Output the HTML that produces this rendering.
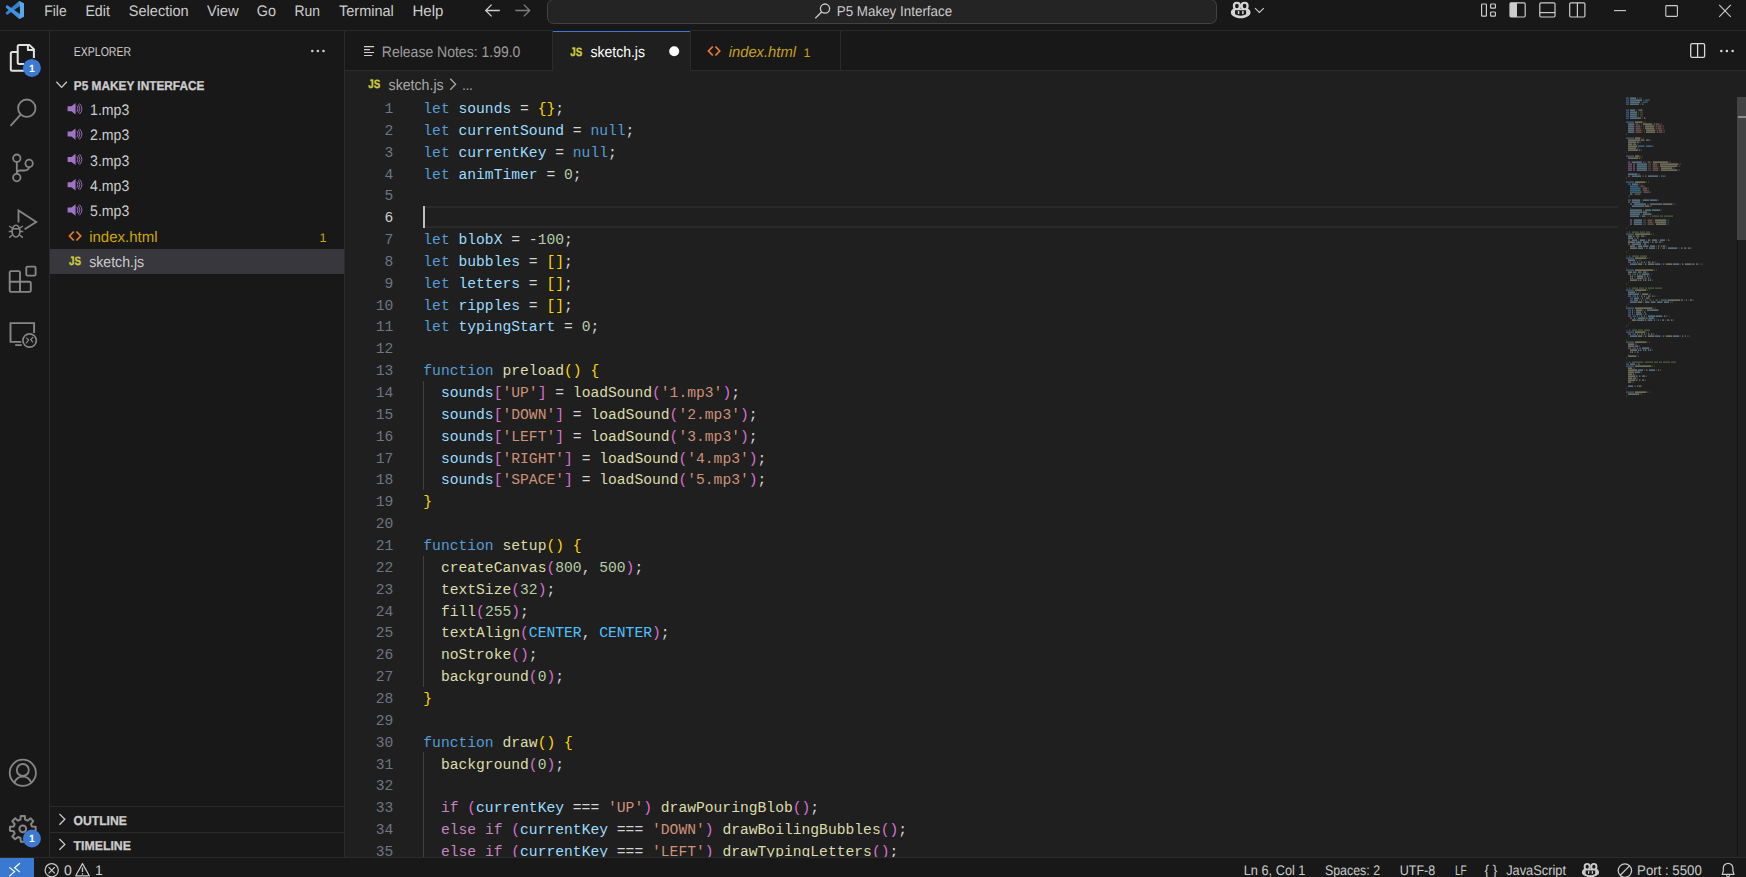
<!DOCTYPE html><html lang="en"><head><meta charset="utf-8"><title>sketch.js - P5 Makey Interface - Visual Studio Code</title>
<style>
*{box-sizing:border-box;margin:0;padding:0}
html,body{width:1746px;height:877px;overflow:hidden;background:#181818}
body{position:relative;font-family:"Liberation Sans", sans-serif;color:#ccc}
.abs{position:absolute}
#editor{left:345px;top:71px;width:1401px;height:786px;background:#1f1f1f}
#tabs{left:345px;top:31px;width:1401px;height:39px;background:#181818}
.hl{background:#2b2b2b}
.cl{position:absolute;left:78.30000000000001px;height:22px;line-height:22px;white-space:pre;font-family:"Liberation Mono", monospace;font-size:14.66px;color:#d4d4d4}
.ln{position:absolute;left:0px;width:48.39999999999998px;height:22px;line-height:22px;text-align:right;font-family:"Liberation Mono", monospace;font-size:14.66px;color:#6e7681}
.ln.a{color:#ccc}
svg text{font-family:"Liberation Sans", sans-serif;text-rendering:geometricPrecision}
</style></head><body>
<div class="abs" style="left:0px;top:30px;width:1746px;height:1px;background:#2b2b2b;"></div>
<div class="abs" style="left:49px;top:31px;width:1px;height:826px;background:#2b2b2b;"></div>
<div class="abs" style="left:344px;top:31px;width:1px;height:826px;background:#2b2b2b;"></div>
<div id="tabs" class="abs"></div>
<div class="abs" style="left:345px;top:70px;width:1401px;height:1px;background:#2b2b2b;"></div>
<div id="editor" class="abs"></div>
<div class="abs" style="left:552px;top:31px;width:1px;height:39px;background:#2b2b2b;"></div>
<div class="abs" style="left:553px;top:31px;width:137px;height:40px;background:#1f1f1f;"></div>
<div class="abs" style="left:553px;top:30px;width:137px;height:1px;background:#1b1a19;"></div>
<div class="abs" style="left:553px;top:31px;width:137px;height:1px;background:#3a7ad4;"></div>
<div class="abs" style="left:690px;top:31px;width:1px;height:39px;background:#2b2b2b;"></div>
<div class="abs" style="left:840px;top:31px;width:1px;height:39px;background:#2b2b2b;"></div>
<div class="abs" style="left:547px;top:-1.5px;width:670px;height:25.5px;background:#242424;border:1px solid #424242;border-radius:6.5px"></div>
<div class="abs" style="left:50px;top:249px;width:293.5px;height:25px;background:#37373d;"></div>
<div class="abs" style="left:50px;top:806px;width:294px;height:1px;background:#2b2b2b;"></div>
<div class="abs" style="left:50px;top:832px;width:294px;height:1px;background:#2b2b2b;"></div>
<div class="abs" style="left:0px;top:857px;width:1746px;height:1px;background:#2b2b2b;"></div>
<div class="abs" style="left:0px;top:858px;width:1746px;height:19px;background:#181818;"></div>
<div class="abs" style="left:0px;top:858px;width:34px;height:19px;background:#3a79d2;"></div>
<div class="abs" style="left:423px;top:206px;width:1195px;height:2px;background:#292929;"></div>
<div class="abs" style="left:423px;top:226px;width:1195px;height:2px;background:#292929;"></div>
<div class="abs" style="left:423px;top:206px;width:2px;height:22px;background:#bdbdbd;"></div>
<div class="abs" style="left:423px;top:381px;width:1px;height:109px;background:#404040;"></div>
<div class="abs" style="left:423px;top:556px;width:1px;height:131px;background:#404040;"></div>
<div class="abs" style="left:423px;top:752px;width:1px;height:105px;background:#404040;"></div>
<div class="abs" style="left:1737px;top:97px;width:1px;height:760px;background:#141414;"></div>
<div class="abs" style="left:1737px;top:97px;width:9px;height:143px;background:#434343;"></div>
<div class="abs" style="left:1738px;top:116px;width:8px;height:2px;background:#8c8c8c;"></div>
<div class="abs" style="left:345px;top:71px;width:1401px;height:786px;overflow:hidden">
<div class="ln" style="top:27px">1</div>
<div class="cl" style="top:27px"><span style="color:#569cd6">let</span> <span style="color:#9cdcfe">sounds</span> <span style="color:#d4d4d4">=</span> <span style="color:#ffd700">{}</span><span style="color:#d4d4d4">;</span></div>
<div class="ln" style="top:49px">2</div>
<div class="cl" style="top:49px"><span style="color:#569cd6">let</span> <span style="color:#9cdcfe">currentSound</span> <span style="color:#d4d4d4">=</span> <span style="color:#569cd6">null</span><span style="color:#d4d4d4">;</span></div>
<div class="ln" style="top:71px">3</div>
<div class="cl" style="top:71px"><span style="color:#569cd6">let</span> <span style="color:#9cdcfe">currentKey</span> <span style="color:#d4d4d4">=</span> <span style="color:#569cd6">null</span><span style="color:#d4d4d4">;</span></div>
<div class="ln" style="top:93px">4</div>
<div class="cl" style="top:93px"><span style="color:#569cd6">let</span> <span style="color:#9cdcfe">animTimer</span> <span style="color:#d4d4d4">=</span> <span style="color:#b5cea8">0</span><span style="color:#d4d4d4">;</span></div>
<div class="ln" style="top:114px">5</div>
<div class="ln a" style="top:136px">6</div>
<div class="ln" style="top:158px">7</div>
<div class="cl" style="top:158px"><span style="color:#569cd6">let</span> <span style="color:#9cdcfe">blobX</span> <span style="color:#d4d4d4">=</span> <span style="color:#d4d4d4">-</span><span style="color:#b5cea8">100</span><span style="color:#d4d4d4">;</span></div>
<div class="ln" style="top:180px">8</div>
<div class="cl" style="top:180px"><span style="color:#569cd6">let</span> <span style="color:#9cdcfe">bubbles</span> <span style="color:#d4d4d4">=</span> <span style="color:#ffd700">[]</span><span style="color:#d4d4d4">;</span></div>
<div class="ln" style="top:202px">9</div>
<div class="cl" style="top:202px"><span style="color:#569cd6">let</span> <span style="color:#9cdcfe">letters</span> <span style="color:#d4d4d4">=</span> <span style="color:#ffd700">[]</span><span style="color:#d4d4d4">;</span></div>
<div class="ln" style="top:224px">10</div>
<div class="cl" style="top:224px"><span style="color:#569cd6">let</span> <span style="color:#9cdcfe">ripples</span> <span style="color:#d4d4d4">=</span> <span style="color:#ffd700">[]</span><span style="color:#d4d4d4">;</span></div>
<div class="ln" style="top:245px">11</div>
<div class="cl" style="top:245px"><span style="color:#569cd6">let</span> <span style="color:#9cdcfe">typingStart</span> <span style="color:#d4d4d4">=</span> <span style="color:#b5cea8">0</span><span style="color:#d4d4d4">;</span></div>
<div class="ln" style="top:267px">12</div>
<div class="ln" style="top:289px">13</div>
<div class="cl" style="top:289px"><span style="color:#569cd6">function</span> <span style="color:#dcdcaa">preload</span><span style="color:#ffd700">()</span> <span style="color:#ffd700">{</span></div>
<div class="ln" style="top:311px">14</div>
<div class="cl" style="top:311px">  <span style="color:#9cdcfe">sounds</span><span style="color:#da70d6">[</span><span style="color:#ce9178">'UP'</span><span style="color:#da70d6">]</span> <span style="color:#d4d4d4">=</span> <span style="color:#dcdcaa">loadSound</span><span style="color:#da70d6">(</span><span style="color:#ce9178">'1.mp3'</span><span style="color:#da70d6">)</span><span style="color:#d4d4d4">;</span></div>
<div class="ln" style="top:333px">15</div>
<div class="cl" style="top:333px">  <span style="color:#9cdcfe">sounds</span><span style="color:#da70d6">[</span><span style="color:#ce9178">'DOWN'</span><span style="color:#da70d6">]</span> <span style="color:#d4d4d4">=</span> <span style="color:#dcdcaa">loadSound</span><span style="color:#da70d6">(</span><span style="color:#ce9178">'2.mp3'</span><span style="color:#da70d6">)</span><span style="color:#d4d4d4">;</span></div>
<div class="ln" style="top:355px">16</div>
<div class="cl" style="top:355px">  <span style="color:#9cdcfe">sounds</span><span style="color:#da70d6">[</span><span style="color:#ce9178">'LEFT'</span><span style="color:#da70d6">]</span> <span style="color:#d4d4d4">=</span> <span style="color:#dcdcaa">loadSound</span><span style="color:#da70d6">(</span><span style="color:#ce9178">'3.mp3'</span><span style="color:#da70d6">)</span><span style="color:#d4d4d4">;</span></div>
<div class="ln" style="top:377px">17</div>
<div class="cl" style="top:377px">  <span style="color:#9cdcfe">sounds</span><span style="color:#da70d6">[</span><span style="color:#ce9178">'RIGHT'</span><span style="color:#da70d6">]</span> <span style="color:#d4d4d4">=</span> <span style="color:#dcdcaa">loadSound</span><span style="color:#da70d6">(</span><span style="color:#ce9178">'4.mp3'</span><span style="color:#da70d6">)</span><span style="color:#d4d4d4">;</span></div>
<div class="ln" style="top:398px">18</div>
<div class="cl" style="top:398px">  <span style="color:#9cdcfe">sounds</span><span style="color:#da70d6">[</span><span style="color:#ce9178">'SPACE'</span><span style="color:#da70d6">]</span> <span style="color:#d4d4d4">=</span> <span style="color:#dcdcaa">loadSound</span><span style="color:#da70d6">(</span><span style="color:#ce9178">'5.mp3'</span><span style="color:#da70d6">)</span><span style="color:#d4d4d4">;</span></div>
<div class="ln" style="top:420px">19</div>
<div class="cl" style="top:420px"><span style="color:#ffd700">}</span></div>
<div class="ln" style="top:442px">20</div>
<div class="ln" style="top:464px">21</div>
<div class="cl" style="top:464px"><span style="color:#569cd6">function</span> <span style="color:#dcdcaa">setup</span><span style="color:#ffd700">()</span> <span style="color:#ffd700">{</span></div>
<div class="ln" style="top:486px">22</div>
<div class="cl" style="top:486px">  <span style="color:#dcdcaa">createCanvas</span><span style="color:#da70d6">(</span><span style="color:#b5cea8">800</span><span style="color:#d4d4d4">,</span> <span style="color:#b5cea8">500</span><span style="color:#da70d6">)</span><span style="color:#d4d4d4">;</span></div>
<div class="ln" style="top:508px">23</div>
<div class="cl" style="top:508px">  <span style="color:#dcdcaa">textSize</span><span style="color:#da70d6">(</span><span style="color:#b5cea8">32</span><span style="color:#da70d6">)</span><span style="color:#d4d4d4">;</span></div>
<div class="ln" style="top:530px">24</div>
<div class="cl" style="top:530px">  <span style="color:#dcdcaa">fill</span><span style="color:#da70d6">(</span><span style="color:#b5cea8">255</span><span style="color:#da70d6">)</span><span style="color:#d4d4d4">;</span></div>
<div class="ln" style="top:551px">25</div>
<div class="cl" style="top:551px">  <span style="color:#dcdcaa">textAlign</span><span style="color:#da70d6">(</span><span style="color:#4fc1ff">CENTER</span><span style="color:#d4d4d4">,</span> <span style="color:#4fc1ff">CENTER</span><span style="color:#da70d6">)</span><span style="color:#d4d4d4">;</span></div>
<div class="ln" style="top:573px">26</div>
<div class="cl" style="top:573px">  <span style="color:#dcdcaa">noStroke</span><span style="color:#da70d6">()</span><span style="color:#d4d4d4">;</span></div>
<div class="ln" style="top:595px">27</div>
<div class="cl" style="top:595px">  <span style="color:#dcdcaa">background</span><span style="color:#da70d6">(</span><span style="color:#b5cea8">0</span><span style="color:#da70d6">)</span><span style="color:#d4d4d4">;</span></div>
<div class="ln" style="top:617px">28</div>
<div class="cl" style="top:617px"><span style="color:#ffd700">}</span></div>
<div class="ln" style="top:639px">29</div>
<div class="ln" style="top:661px">30</div>
<div class="cl" style="top:661px"><span style="color:#569cd6">function</span> <span style="color:#dcdcaa">draw</span><span style="color:#ffd700">()</span> <span style="color:#ffd700">{</span></div>
<div class="ln" style="top:683px">31</div>
<div class="cl" style="top:683px">  <span style="color:#dcdcaa">background</span><span style="color:#da70d6">(</span><span style="color:#b5cea8">0</span><span style="color:#da70d6">)</span><span style="color:#d4d4d4">;</span></div>
<div class="ln" style="top:704px">32</div>
<div class="ln" style="top:726px">33</div>
<div class="cl" style="top:726px">  <span style="color:#c586c0">if</span> <span style="color:#da70d6">(</span><span style="color:#9cdcfe">currentKey</span> <span style="color:#d4d4d4">===</span> <span style="color:#ce9178">'UP'</span><span style="color:#da70d6">)</span> <span style="color:#dcdcaa">drawPouringBlob</span><span style="color:#da70d6">()</span><span style="color:#d4d4d4">;</span></div>
<div class="ln" style="top:748px">34</div>
<div class="cl" style="top:748px">  <span style="color:#c586c0">else</span> <span style="color:#c586c0">if</span> <span style="color:#da70d6">(</span><span style="color:#9cdcfe">currentKey</span> <span style="color:#d4d4d4">===</span> <span style="color:#ce9178">'DOWN'</span><span style="color:#da70d6">)</span> <span style="color:#dcdcaa">drawBoilingBubbles</span><span style="color:#da70d6">()</span><span style="color:#d4d4d4">;</span></div>
<div class="ln" style="top:770px">35</div>
<div class="cl" style="top:770px">  <span style="color:#c586c0">else</span> <span style="color:#c586c0">if</span> <span style="color:#da70d6">(</span><span style="color:#9cdcfe">currentKey</span> <span style="color:#d4d4d4">===</span> <span style="color:#ce9178">'LEFT'</span><span style="color:#da70d6">)</span> <span style="color:#dcdcaa">drawTypingLetters</span><span style="color:#da70d6">()</span><span style="color:#d4d4d4">;</span></div>
</div>
<svg class="abs" style="left:0;top:0" width="1746" height="877" viewBox="0 0 1746 877">
<text x="44.3" y="16" font-size="15.3" fill="#cccccc" textLength="22.3" lengthAdjust="spacingAndGlyphs">File</text>
<text x="85.4" y="16" font-size="15.3" fill="#cccccc" textLength="24.5" lengthAdjust="spacingAndGlyphs">Edit</text>
<text x="128.8" y="16" font-size="15.3" fill="#cccccc" textLength="59.8" lengthAdjust="spacingAndGlyphs">Selection</text>
<text x="207" y="16" font-size="15.3" fill="#cccccc" textLength="31.7" lengthAdjust="spacingAndGlyphs">View</text>
<text x="256.8" y="16" font-size="15.3" fill="#cccccc" textLength="19.2" lengthAdjust="spacingAndGlyphs">Go</text>
<text x="294.5" y="16" font-size="15.3" fill="#cccccc" textLength="25.5" lengthAdjust="spacingAndGlyphs">Run</text>
<text x="339" y="16" font-size="15.3" fill="#cccccc" textLength="54.8" lengthAdjust="spacingAndGlyphs">Terminal</text>
<text x="412.5" y="16" font-size="15.3" fill="#cccccc" textLength="30.9" lengthAdjust="spacingAndGlyphs">Help</text>
<text x="836.7" y="16" font-size="14.3" fill="#cccccc" textLength="115.5" lengthAdjust="spacingAndGlyphs">P5 Makey Interface</text>
<text x="381.8" y="57" font-size="15.3" fill="#9d9d9d" textLength="138.6" lengthAdjust="spacingAndGlyphs">Release Notes: 1.99.0</text>
<text x="590.4" y="57" font-size="15.3" fill="#ffffff" textLength="54.6" lengthAdjust="spacingAndGlyphs">sketch.js</text>
<text x="728.7" y="57" font-size="15.3" fill="#c5a11a" textLength="67.3" lengthAdjust="spacingAndGlyphs" font-style="italic">index.html</text>
<text x="803.4" y="57" font-size="12.5" fill="#c5a11a">1</text>
<text x="388.6" y="90.0" font-size="15.3" fill="#a9a9a9" textLength="55.0" lengthAdjust="spacingAndGlyphs">sketch.js</text>
<text x="462.3" y="90.0" font-size="15.3" fill="#a9a9a9" textLength="10.3" lengthAdjust="spacingAndGlyphs">...</text>
<text x="73.8" y="56.2" font-size="12.9" fill="#cccccc" textLength="57.2" lengthAdjust="spacingAndGlyphs">EXPLORER</text>
<text x="73.8" y="90.2" font-size="12.9" fill="#cccccc" textLength="130.6" lengthAdjust="spacingAndGlyphs" font-weight="bold" stroke="#cccccc" stroke-width="0.3">P5 MAKEY INTERFACE</text>
<text x="90.1" y="115" font-size="15.3" fill="#cccccc" textLength="39.2" lengthAdjust="spacingAndGlyphs">1.mp3</text>
<text x="90.1" y="140" font-size="15.3" fill="#cccccc" textLength="39.2" lengthAdjust="spacingAndGlyphs">2.mp3</text>
<text x="90.1" y="166" font-size="15.3" fill="#cccccc" textLength="39.2" lengthAdjust="spacingAndGlyphs">3.mp3</text>
<text x="90.1" y="191" font-size="15.3" fill="#cccccc" textLength="39.2" lengthAdjust="spacingAndGlyphs">4.mp3</text>
<text x="90.1" y="216" font-size="15.3" fill="#cccccc" textLength="39.2" lengthAdjust="spacingAndGlyphs">5.mp3</text>
<text x="89.2" y="242" font-size="15.3" fill="#cca700" textLength="68.4" lengthAdjust="spacingAndGlyphs">index.html</text>
<text x="319.6" y="242" font-size="12.5" fill="#cca700">1</text>
<text x="89.2" y="267" font-size="15.3" fill="#cccccc" textLength="55.0" lengthAdjust="spacingAndGlyphs">sketch.js</text>
<text x="73.5" y="825" font-size="12.9" fill="#cccccc" textLength="53.3" lengthAdjust="spacingAndGlyphs" font-weight="bold" stroke="#cccccc" stroke-width="0.3">OUTLINE</text>
<text x="73.5" y="850" font-size="12.9" fill="#cccccc" textLength="57.4" lengthAdjust="spacingAndGlyphs" font-weight="bold" stroke="#cccccc" stroke-width="0.3">TIMELINE</text>
<text x="64" y="875" font-size="14.0" fill="#cccccc">0</text>
<text x="95.1" y="875" font-size="14.0" fill="#cccccc">1</text>
<text x="1243.7" y="875" font-size="14.0" fill="#cccccc" textLength="61.8" lengthAdjust="spacingAndGlyphs">Ln 6, Col 1</text>
<text x="1324.9" y="875" font-size="14.0" fill="#cccccc" textLength="55.2" lengthAdjust="spacingAndGlyphs">Spaces: 2</text>
<text x="1399.8" y="875" font-size="14.0" fill="#cccccc" textLength="35.4" lengthAdjust="spacingAndGlyphs">UTF-8</text>
<text x="1454.9" y="875" font-size="14.0" fill="#cccccc" textLength="11.9" lengthAdjust="spacingAndGlyphs">LF</text>
<text x="1484.5" y="874.5" font-size="14.0" fill="#cccccc" textLength="12.7" lengthAdjust="spacingAndGlyphs">{ }</text>
<text x="1506.2" y="875" font-size="14.0" fill="#cccccc" textLength="59.8" lengthAdjust="spacingAndGlyphs">JavaScript</text>
<text x="1637.1" y="875" font-size="14.0" fill="#cccccc" textLength="64.7" lengthAdjust="spacingAndGlyphs">Port : 5500</text>
<g><rect x="1626" y="97.4" width="3" height="1.5" fill="#569cd6" opacity="0.45"/><rect x="1630" y="97.4" width="6" height="1.5" fill="#9cdcfe" opacity="0.45"/><rect x="1637" y="97.4" width="1" height="1.5" fill="#d4d4d4" opacity="0.18"/><rect x="1639" y="97.4" width="2" height="1.5" fill="#ffd700" opacity="0.18"/><rect x="1641" y="97.4" width="1" height="1.5" fill="#d4d4d4" opacity="0.18"/><rect x="1626" y="99.4" width="3" height="1.5" fill="#569cd6" opacity="0.45"/><rect x="1630" y="99.4" width="12" height="1.5" fill="#9cdcfe" opacity="0.45"/><rect x="1643" y="99.4" width="1" height="1.5" fill="#d4d4d4" opacity="0.18"/><rect x="1645" y="99.4" width="4" height="1.5" fill="#569cd6" opacity="0.45"/><rect x="1649" y="99.4" width="1" height="1.5" fill="#d4d4d4" opacity="0.18"/><rect x="1626" y="101.4" width="3" height="1.5" fill="#569cd6" opacity="0.45"/><rect x="1630" y="101.4" width="10" height="1.5" fill="#9cdcfe" opacity="0.45"/><rect x="1641" y="101.4" width="1" height="1.5" fill="#d4d4d4" opacity="0.18"/><rect x="1643" y="101.4" width="4" height="1.5" fill="#569cd6" opacity="0.45"/><rect x="1647" y="101.4" width="1" height="1.5" fill="#d4d4d4" opacity="0.18"/><rect x="1626" y="103.4" width="3" height="1.5" fill="#569cd6" opacity="0.45"/><rect x="1630" y="103.4" width="9" height="1.5" fill="#9cdcfe" opacity="0.45"/><rect x="1640" y="103.4" width="1" height="1.5" fill="#d4d4d4" opacity="0.18"/><rect x="1642" y="103.4" width="1" height="1.5" fill="#b5cea8" opacity="0.45"/><rect x="1643" y="103.4" width="1" height="1.5" fill="#d4d4d4" opacity="0.18"/><rect x="1626" y="109.4" width="3" height="1.5" fill="#569cd6" opacity="0.45"/><rect x="1630" y="109.4" width="5" height="1.5" fill="#9cdcfe" opacity="0.45"/><rect x="1636" y="109.4" width="1" height="1.5" fill="#d4d4d4" opacity="0.18"/><rect x="1638" y="109.4" width="1" height="1.5" fill="#d4d4d4" opacity="0.18"/><rect x="1639" y="109.4" width="3" height="1.5" fill="#b5cea8" opacity="0.45"/><rect x="1642" y="109.4" width="1" height="1.5" fill="#d4d4d4" opacity="0.18"/><rect x="1626" y="111.4" width="3" height="1.5" fill="#569cd6" opacity="0.45"/><rect x="1630" y="111.4" width="7" height="1.5" fill="#9cdcfe" opacity="0.45"/><rect x="1638" y="111.4" width="1" height="1.5" fill="#d4d4d4" opacity="0.18"/><rect x="1640" y="111.4" width="2" height="1.5" fill="#ffd700" opacity="0.18"/><rect x="1642" y="111.4" width="1" height="1.5" fill="#d4d4d4" opacity="0.18"/><rect x="1626" y="113.4" width="3" height="1.5" fill="#569cd6" opacity="0.45"/><rect x="1630" y="113.4" width="7" height="1.5" fill="#9cdcfe" opacity="0.45"/><rect x="1638" y="113.4" width="1" height="1.5" fill="#d4d4d4" opacity="0.18"/><rect x="1640" y="113.4" width="2" height="1.5" fill="#ffd700" opacity="0.18"/><rect x="1642" y="113.4" width="1" height="1.5" fill="#d4d4d4" opacity="0.18"/><rect x="1626" y="115.4" width="3" height="1.5" fill="#569cd6" opacity="0.45"/><rect x="1630" y="115.4" width="7" height="1.5" fill="#9cdcfe" opacity="0.45"/><rect x="1638" y="115.4" width="1" height="1.5" fill="#d4d4d4" opacity="0.18"/><rect x="1640" y="115.4" width="2" height="1.5" fill="#ffd700" opacity="0.18"/><rect x="1642" y="115.4" width="1" height="1.5" fill="#d4d4d4" opacity="0.18"/><rect x="1626" y="117.4" width="3" height="1.5" fill="#569cd6" opacity="0.45"/><rect x="1630" y="117.4" width="11" height="1.5" fill="#9cdcfe" opacity="0.45"/><rect x="1642" y="117.4" width="1" height="1.5" fill="#d4d4d4" opacity="0.18"/><rect x="1644" y="117.4" width="1" height="1.5" fill="#b5cea8" opacity="0.45"/><rect x="1645" y="117.4" width="1" height="1.5" fill="#d4d4d4" opacity="0.18"/><rect x="1626" y="121.4" width="8" height="1.5" fill="#569cd6" opacity="0.45"/><rect x="1635" y="121.4" width="7" height="1.5" fill="#dcdcaa" opacity="0.45"/><rect x="1642" y="121.4" width="2" height="1.5" fill="#ffd700" opacity="0.18"/><rect x="1645" y="121.4" width="1" height="1.5" fill="#ffd700" opacity="0.18"/><rect x="1628" y="123.4" width="6" height="1.5" fill="#9cdcfe" opacity="0.45"/><rect x="1634" y="123.4" width="1" height="1.5" fill="#da70d6" opacity="0.18"/><rect x="1635" y="123.4" width="1" height="1.5" fill="#ce9178" opacity="0.18"/><rect x="1636" y="123.4" width="2" height="1.5" fill="#ce9178" opacity="0.45"/><rect x="1638" y="123.4" width="1" height="1.5" fill="#ce9178" opacity="0.18"/><rect x="1639" y="123.4" width="1" height="1.5" fill="#da70d6" opacity="0.18"/><rect x="1641" y="123.4" width="1" height="1.5" fill="#d4d4d4" opacity="0.18"/><rect x="1643" y="123.4" width="9" height="1.5" fill="#dcdcaa" opacity="0.45"/><rect x="1652" y="123.4" width="1" height="1.5" fill="#da70d6" opacity="0.18"/><rect x="1653" y="123.4" width="1" height="1.5" fill="#ce9178" opacity="0.18"/><rect x="1654" y="123.4" width="1" height="1.5" fill="#ce9178" opacity="0.45"/><rect x="1655" y="123.4" width="1" height="1.5" fill="#ce9178" opacity="0.18"/><rect x="1656" y="123.4" width="3" height="1.5" fill="#ce9178" opacity="0.45"/><rect x="1659" y="123.4" width="1" height="1.5" fill="#ce9178" opacity="0.18"/><rect x="1660" y="123.4" width="1" height="1.5" fill="#da70d6" opacity="0.18"/><rect x="1661" y="123.4" width="1" height="1.5" fill="#d4d4d4" opacity="0.18"/><rect x="1628" y="125.4" width="6" height="1.5" fill="#9cdcfe" opacity="0.45"/><rect x="1634" y="125.4" width="1" height="1.5" fill="#da70d6" opacity="0.18"/><rect x="1635" y="125.4" width="1" height="1.5" fill="#ce9178" opacity="0.18"/><rect x="1636" y="125.4" width="4" height="1.5" fill="#ce9178" opacity="0.45"/><rect x="1640" y="125.4" width="1" height="1.5" fill="#ce9178" opacity="0.18"/><rect x="1641" y="125.4" width="1" height="1.5" fill="#da70d6" opacity="0.18"/><rect x="1643" y="125.4" width="1" height="1.5" fill="#d4d4d4" opacity="0.18"/><rect x="1645" y="125.4" width="9" height="1.5" fill="#dcdcaa" opacity="0.45"/><rect x="1654" y="125.4" width="1" height="1.5" fill="#da70d6" opacity="0.18"/><rect x="1655" y="125.4" width="1" height="1.5" fill="#ce9178" opacity="0.18"/><rect x="1656" y="125.4" width="1" height="1.5" fill="#ce9178" opacity="0.45"/><rect x="1657" y="125.4" width="1" height="1.5" fill="#ce9178" opacity="0.18"/><rect x="1658" y="125.4" width="3" height="1.5" fill="#ce9178" opacity="0.45"/><rect x="1661" y="125.4" width="1" height="1.5" fill="#ce9178" opacity="0.18"/><rect x="1662" y="125.4" width="1" height="1.5" fill="#da70d6" opacity="0.18"/><rect x="1663" y="125.4" width="1" height="1.5" fill="#d4d4d4" opacity="0.18"/><rect x="1628" y="127.4" width="6" height="1.5" fill="#9cdcfe" opacity="0.45"/><rect x="1634" y="127.4" width="1" height="1.5" fill="#da70d6" opacity="0.18"/><rect x="1635" y="127.4" width="1" height="1.5" fill="#ce9178" opacity="0.18"/><rect x="1636" y="127.4" width="4" height="1.5" fill="#ce9178" opacity="0.45"/><rect x="1640" y="127.4" width="1" height="1.5" fill="#ce9178" opacity="0.18"/><rect x="1641" y="127.4" width="1" height="1.5" fill="#da70d6" opacity="0.18"/><rect x="1643" y="127.4" width="1" height="1.5" fill="#d4d4d4" opacity="0.18"/><rect x="1645" y="127.4" width="9" height="1.5" fill="#dcdcaa" opacity="0.45"/><rect x="1654" y="127.4" width="1" height="1.5" fill="#da70d6" opacity="0.18"/><rect x="1655" y="127.4" width="1" height="1.5" fill="#ce9178" opacity="0.18"/><rect x="1656" y="127.4" width="1" height="1.5" fill="#ce9178" opacity="0.45"/><rect x="1657" y="127.4" width="1" height="1.5" fill="#ce9178" opacity="0.18"/><rect x="1658" y="127.4" width="3" height="1.5" fill="#ce9178" opacity="0.45"/><rect x="1661" y="127.4" width="1" height="1.5" fill="#ce9178" opacity="0.18"/><rect x="1662" y="127.4" width="1" height="1.5" fill="#da70d6" opacity="0.18"/><rect x="1663" y="127.4" width="1" height="1.5" fill="#d4d4d4" opacity="0.18"/><rect x="1628" y="129.4" width="6" height="1.5" fill="#9cdcfe" opacity="0.45"/><rect x="1634" y="129.4" width="1" height="1.5" fill="#da70d6" opacity="0.18"/><rect x="1635" y="129.4" width="1" height="1.5" fill="#ce9178" opacity="0.18"/><rect x="1636" y="129.4" width="5" height="1.5" fill="#ce9178" opacity="0.45"/><rect x="1641" y="129.4" width="1" height="1.5" fill="#ce9178" opacity="0.18"/><rect x="1642" y="129.4" width="1" height="1.5" fill="#da70d6" opacity="0.18"/><rect x="1644" y="129.4" width="1" height="1.5" fill="#d4d4d4" opacity="0.18"/><rect x="1646" y="129.4" width="9" height="1.5" fill="#dcdcaa" opacity="0.45"/><rect x="1655" y="129.4" width="1" height="1.5" fill="#da70d6" opacity="0.18"/><rect x="1656" y="129.4" width="1" height="1.5" fill="#ce9178" opacity="0.18"/><rect x="1657" y="129.4" width="1" height="1.5" fill="#ce9178" opacity="0.45"/><rect x="1658" y="129.4" width="1" height="1.5" fill="#ce9178" opacity="0.18"/><rect x="1659" y="129.4" width="3" height="1.5" fill="#ce9178" opacity="0.45"/><rect x="1662" y="129.4" width="1" height="1.5" fill="#ce9178" opacity="0.18"/><rect x="1663" y="129.4" width="1" height="1.5" fill="#da70d6" opacity="0.18"/><rect x="1664" y="129.4" width="1" height="1.5" fill="#d4d4d4" opacity="0.18"/><rect x="1628" y="131.4" width="6" height="1.5" fill="#9cdcfe" opacity="0.45"/><rect x="1634" y="131.4" width="1" height="1.5" fill="#da70d6" opacity="0.18"/><rect x="1635" y="131.4" width="1" height="1.5" fill="#ce9178" opacity="0.18"/><rect x="1636" y="131.4" width="5" height="1.5" fill="#ce9178" opacity="0.45"/><rect x="1641" y="131.4" width="1" height="1.5" fill="#ce9178" opacity="0.18"/><rect x="1642" y="131.4" width="1" height="1.5" fill="#da70d6" opacity="0.18"/><rect x="1644" y="131.4" width="1" height="1.5" fill="#d4d4d4" opacity="0.18"/><rect x="1646" y="131.4" width="9" height="1.5" fill="#dcdcaa" opacity="0.45"/><rect x="1655" y="131.4" width="1" height="1.5" fill="#da70d6" opacity="0.18"/><rect x="1656" y="131.4" width="1" height="1.5" fill="#ce9178" opacity="0.18"/><rect x="1657" y="131.4" width="1" height="1.5" fill="#ce9178" opacity="0.45"/><rect x="1658" y="131.4" width="1" height="1.5" fill="#ce9178" opacity="0.18"/><rect x="1659" y="131.4" width="3" height="1.5" fill="#ce9178" opacity="0.45"/><rect x="1662" y="131.4" width="1" height="1.5" fill="#ce9178" opacity="0.18"/><rect x="1663" y="131.4" width="1" height="1.5" fill="#da70d6" opacity="0.18"/><rect x="1664" y="131.4" width="1" height="1.5" fill="#d4d4d4" opacity="0.18"/><rect x="1626" y="133.4" width="1" height="1.5" fill="#ffd700" opacity="0.18"/><rect x="1626" y="137.4" width="8" height="1.5" fill="#569cd6" opacity="0.45"/><rect x="1635" y="137.4" width="5" height="1.5" fill="#dcdcaa" opacity="0.45"/><rect x="1640" y="137.4" width="2" height="1.5" fill="#ffd700" opacity="0.18"/><rect x="1643" y="137.4" width="1" height="1.5" fill="#ffd700" opacity="0.18"/><rect x="1628" y="139.4" width="12" height="1.5" fill="#dcdcaa" opacity="0.45"/><rect x="1640" y="139.4" width="1" height="1.5" fill="#da70d6" opacity="0.18"/><rect x="1641" y="139.4" width="3" height="1.5" fill="#b5cea8" opacity="0.45"/><rect x="1644" y="139.4" width="1" height="1.5" fill="#d4d4d4" opacity="0.18"/><rect x="1646" y="139.4" width="3" height="1.5" fill="#b5cea8" opacity="0.45"/><rect x="1649" y="139.4" width="1" height="1.5" fill="#da70d6" opacity="0.18"/><rect x="1650" y="139.4" width="1" height="1.5" fill="#d4d4d4" opacity="0.18"/><rect x="1628" y="141.4" width="8" height="1.5" fill="#dcdcaa" opacity="0.45"/><rect x="1636" y="141.4" width="1" height="1.5" fill="#da70d6" opacity="0.18"/><rect x="1637" y="141.4" width="2" height="1.5" fill="#b5cea8" opacity="0.45"/><rect x="1639" y="141.4" width="1" height="1.5" fill="#da70d6" opacity="0.18"/><rect x="1640" y="141.4" width="1" height="1.5" fill="#d4d4d4" opacity="0.18"/><rect x="1628" y="143.4" width="4" height="1.5" fill="#dcdcaa" opacity="0.45"/><rect x="1632" y="143.4" width="1" height="1.5" fill="#da70d6" opacity="0.18"/><rect x="1633" y="143.4" width="3" height="1.5" fill="#b5cea8" opacity="0.45"/><rect x="1636" y="143.4" width="1" height="1.5" fill="#da70d6" opacity="0.18"/><rect x="1637" y="143.4" width="1" height="1.5" fill="#d4d4d4" opacity="0.18"/><rect x="1628" y="145.4" width="9" height="1.5" fill="#dcdcaa" opacity="0.45"/><rect x="1637" y="145.4" width="1" height="1.5" fill="#da70d6" opacity="0.18"/><rect x="1638" y="145.4" width="6" height="1.5" fill="#4fc1ff" opacity="0.45"/><rect x="1644" y="145.4" width="1" height="1.5" fill="#d4d4d4" opacity="0.18"/><rect x="1646" y="145.4" width="6" height="1.5" fill="#4fc1ff" opacity="0.45"/><rect x="1652" y="145.4" width="1" height="1.5" fill="#da70d6" opacity="0.18"/><rect x="1653" y="145.4" width="1" height="1.5" fill="#d4d4d4" opacity="0.18"/><rect x="1628" y="147.4" width="8" height="1.5" fill="#dcdcaa" opacity="0.45"/><rect x="1636" y="147.4" width="2" height="1.5" fill="#da70d6" opacity="0.18"/><rect x="1638" y="147.4" width="1" height="1.5" fill="#d4d4d4" opacity="0.18"/><rect x="1628" y="149.4" width="10" height="1.5" fill="#dcdcaa" opacity="0.45"/><rect x="1638" y="149.4" width="1" height="1.5" fill="#da70d6" opacity="0.18"/><rect x="1639" y="149.4" width="1" height="1.5" fill="#b5cea8" opacity="0.45"/><rect x="1640" y="149.4" width="1" height="1.5" fill="#da70d6" opacity="0.18"/><rect x="1641" y="149.4" width="1" height="1.5" fill="#d4d4d4" opacity="0.18"/><rect x="1626" y="151.4" width="1" height="1.5" fill="#ffd700" opacity="0.18"/><rect x="1626" y="155.4" width="8" height="1.5" fill="#569cd6" opacity="0.45"/><rect x="1635" y="155.4" width="4" height="1.5" fill="#dcdcaa" opacity="0.45"/><rect x="1639" y="155.4" width="2" height="1.5" fill="#ffd700" opacity="0.18"/><rect x="1642" y="155.4" width="1" height="1.5" fill="#ffd700" opacity="0.18"/><rect x="1628" y="157.4" width="10" height="1.5" fill="#dcdcaa" opacity="0.45"/><rect x="1638" y="157.4" width="1" height="1.5" fill="#da70d6" opacity="0.18"/><rect x="1639" y="157.4" width="1" height="1.5" fill="#b5cea8" opacity="0.45"/><rect x="1640" y="157.4" width="1" height="1.5" fill="#da70d6" opacity="0.18"/><rect x="1641" y="157.4" width="1" height="1.5" fill="#d4d4d4" opacity="0.18"/><rect x="1628" y="161.4" width="2" height="1.5" fill="#c586c0" opacity="0.45"/><rect x="1631" y="161.4" width="1" height="1.5" fill="#da70d6" opacity="0.18"/><rect x="1632" y="161.4" width="10" height="1.5" fill="#9cdcfe" opacity="0.45"/><rect x="1643" y="161.4" width="3" height="1.5" fill="#d4d4d4" opacity="0.18"/><rect x="1647" y="161.4" width="1" height="1.5" fill="#ce9178" opacity="0.18"/><rect x="1648" y="161.4" width="2" height="1.5" fill="#ce9178" opacity="0.45"/><rect x="1650" y="161.4" width="1" height="1.5" fill="#ce9178" opacity="0.18"/><rect x="1651" y="161.4" width="1" height="1.5" fill="#da70d6" opacity="0.18"/><rect x="1653" y="161.4" width="15" height="1.5" fill="#dcdcaa" opacity="0.45"/><rect x="1668" y="161.4" width="2" height="1.5" fill="#da70d6" opacity="0.18"/><rect x="1670" y="161.4" width="1" height="1.5" fill="#d4d4d4" opacity="0.18"/><rect x="1628" y="163.4" width="4" height="1.5" fill="#c586c0" opacity="0.45"/><rect x="1633" y="163.4" width="2" height="1.5" fill="#c586c0" opacity="0.45"/><rect x="1636" y="163.4" width="1" height="1.5" fill="#da70d6" opacity="0.18"/><rect x="1637" y="163.4" width="10" height="1.5" fill="#9cdcfe" opacity="0.45"/><rect x="1648" y="163.4" width="3" height="1.5" fill="#d4d4d4" opacity="0.18"/><rect x="1652" y="163.4" width="1" height="1.5" fill="#ce9178" opacity="0.18"/><rect x="1653" y="163.4" width="4" height="1.5" fill="#ce9178" opacity="0.45"/><rect x="1657" y="163.4" width="1" height="1.5" fill="#ce9178" opacity="0.18"/><rect x="1658" y="163.4" width="1" height="1.5" fill="#da70d6" opacity="0.18"/><rect x="1660" y="163.4" width="18" height="1.5" fill="#dcdcaa" opacity="0.45"/><rect x="1678" y="163.4" width="2" height="1.5" fill="#da70d6" opacity="0.18"/><rect x="1680" y="163.4" width="1" height="1.5" fill="#d4d4d4" opacity="0.18"/><rect x="1628" y="165.4" width="4" height="1.5" fill="#c586c0" opacity="0.45"/><rect x="1633" y="165.4" width="2" height="1.5" fill="#c586c0" opacity="0.45"/><rect x="1636" y="165.4" width="1" height="1.5" fill="#da70d6" opacity="0.18"/><rect x="1637" y="165.4" width="10" height="1.5" fill="#9cdcfe" opacity="0.45"/><rect x="1648" y="165.4" width="3" height="1.5" fill="#d4d4d4" opacity="0.18"/><rect x="1652" y="165.4" width="1" height="1.5" fill="#ce9178" opacity="0.18"/><rect x="1653" y="165.4" width="4" height="1.5" fill="#ce9178" opacity="0.45"/><rect x="1657" y="165.4" width="1" height="1.5" fill="#ce9178" opacity="0.18"/><rect x="1658" y="165.4" width="1" height="1.5" fill="#da70d6" opacity="0.18"/><rect x="1660" y="165.4" width="17" height="1.5" fill="#dcdcaa" opacity="0.45"/><rect x="1677" y="165.4" width="2" height="1.5" fill="#da70d6" opacity="0.18"/><rect x="1679" y="165.4" width="1" height="1.5" fill="#d4d4d4" opacity="0.18"/><rect x="1628" y="167.4" width="4" height="1.5" fill="#c586c0" opacity="0.45"/><rect x="1633" y="167.4" width="2" height="1.5" fill="#c586c0" opacity="0.45"/><rect x="1636" y="167.4" width="1" height="1.5" fill="#da70d6" opacity="0.18"/><rect x="1637" y="167.4" width="10" height="1.5" fill="#9cdcfe" opacity="0.45"/><rect x="1648" y="167.4" width="3" height="1.5" fill="#d4d4d4" opacity="0.18"/><rect x="1652" y="167.4" width="1" height="1.5" fill="#ce9178" opacity="0.18"/><rect x="1653" y="167.4" width="5" height="1.5" fill="#ce9178" opacity="0.45"/><rect x="1658" y="167.4" width="1" height="1.5" fill="#ce9178" opacity="0.18"/><rect x="1659" y="167.4" width="1" height="1.5" fill="#da70d6" opacity="0.18"/><rect x="1661" y="167.4" width="11" height="1.5" fill="#dcdcaa" opacity="0.45"/><rect x="1672" y="167.4" width="2" height="1.5" fill="#da70d6" opacity="0.18"/><rect x="1674" y="167.4" width="1" height="1.5" fill="#d4d4d4" opacity="0.18"/><rect x="1628" y="169.4" width="4" height="1.5" fill="#c586c0" opacity="0.45"/><rect x="1633" y="169.4" width="2" height="1.5" fill="#c586c0" opacity="0.45"/><rect x="1636" y="169.4" width="1" height="1.5" fill="#da70d6" opacity="0.18"/><rect x="1637" y="169.4" width="10" height="1.5" fill="#9cdcfe" opacity="0.45"/><rect x="1648" y="169.4" width="3" height="1.5" fill="#d4d4d4" opacity="0.18"/><rect x="1652" y="169.4" width="1" height="1.5" fill="#ce9178" opacity="0.18"/><rect x="1653" y="169.4" width="5" height="1.5" fill="#ce9178" opacity="0.45"/><rect x="1658" y="169.4" width="1" height="1.5" fill="#ce9178" opacity="0.18"/><rect x="1659" y="169.4" width="1" height="1.5" fill="#da70d6" opacity="0.18"/><rect x="1661" y="169.4" width="16" height="1.5" fill="#dcdcaa" opacity="0.45"/><rect x="1677" y="169.4" width="2" height="1.5" fill="#da70d6" opacity="0.18"/><rect x="1679" y="169.4" width="1" height="1.5" fill="#d4d4d4" opacity="0.18"/><rect x="1628" y="173.4" width="9" height="1.5" fill="#9cdcfe" opacity="0.45"/><rect x="1637" y="173.4" width="3" height="1.5" fill="#d4d4d4" opacity="0.18"/><rect x="1628" y="175.4" width="2" height="1.5" fill="#c586c0" opacity="0.45"/><rect x="1631" y="175.4" width="1" height="1.5" fill="#da70d6" opacity="0.18"/><rect x="1632" y="175.4" width="9" height="1.5" fill="#9cdcfe" opacity="0.45"/><rect x="1642" y="175.4" width="2" height="1.5" fill="#d4d4d4" opacity="0.18"/><rect x="1645" y="175.4" width="1" height="1.5" fill="#b5cea8" opacity="0.45"/><rect x="1646" y="175.4" width="1" height="1.5" fill="#da70d6" opacity="0.18"/><rect x="1648" y="175.4" width="10" height="1.5" fill="#9cdcfe" opacity="0.45"/><rect x="1659" y="175.4" width="1" height="1.5" fill="#d4d4d4" opacity="0.18"/><rect x="1661" y="175.4" width="4" height="1.5" fill="#569cd6" opacity="0.45"/><rect x="1665" y="175.4" width="1" height="1.5" fill="#d4d4d4" opacity="0.18"/><rect x="1626" y="177.4" width="1" height="1.5" fill="#ffd700" opacity="0.18"/><rect x="1626" y="181.4" width="8" height="1.5" fill="#569cd6" opacity="0.45"/><rect x="1635" y="181.4" width="10" height="1.5" fill="#dcdcaa" opacity="0.45"/><rect x="1645" y="181.4" width="2" height="1.5" fill="#ffd700" opacity="0.18"/><rect x="1648" y="181.4" width="1" height="1.5" fill="#ffd700" opacity="0.18"/><rect x="1628" y="183.4" width="3" height="1.5" fill="#569cd6" opacity="0.45"/><rect x="1632" y="183.4" width="6" height="1.5" fill="#9cdcfe" opacity="0.45"/><rect x="1639" y="183.4" width="1" height="1.5" fill="#d4d4d4" opacity="0.18"/><rect x="1641" y="183.4" width="1" height="1.5" fill="#da70d6" opacity="0.18"/><rect x="1630" y="185.4" width="8" height="1.5" fill="#4fc1ff" opacity="0.45"/><rect x="1638" y="185.4" width="1" height="1.5" fill="#d4d4d4" opacity="0.18"/><rect x="1640" y="185.4" width="1" height="1.5" fill="#ce9178" opacity="0.18"/><rect x="1641" y="185.4" width="2" height="1.5" fill="#ce9178" opacity="0.45"/><rect x="1643" y="185.4" width="1" height="1.5" fill="#ce9178" opacity="0.18"/><rect x="1644" y="185.4" width="1" height="1.5" fill="#d4d4d4" opacity="0.18"/><rect x="1630" y="187.4" width="10" height="1.5" fill="#4fc1ff" opacity="0.45"/><rect x="1640" y="187.4" width="1" height="1.5" fill="#d4d4d4" opacity="0.18"/><rect x="1642" y="187.4" width="1" height="1.5" fill="#ce9178" opacity="0.18"/><rect x="1643" y="187.4" width="4" height="1.5" fill="#ce9178" opacity="0.45"/><rect x="1647" y="187.4" width="1" height="1.5" fill="#ce9178" opacity="0.18"/><rect x="1648" y="187.4" width="1" height="1.5" fill="#d4d4d4" opacity="0.18"/><rect x="1630" y="189.4" width="10" height="1.5" fill="#4fc1ff" opacity="0.45"/><rect x="1640" y="189.4" width="1" height="1.5" fill="#d4d4d4" opacity="0.18"/><rect x="1642" y="189.4" width="1" height="1.5" fill="#ce9178" opacity="0.18"/><rect x="1643" y="189.4" width="4" height="1.5" fill="#ce9178" opacity="0.45"/><rect x="1647" y="189.4" width="1" height="1.5" fill="#ce9178" opacity="0.18"/><rect x="1648" y="189.4" width="1" height="1.5" fill="#d4d4d4" opacity="0.18"/><rect x="1630" y="191.4" width="11" height="1.5" fill="#4fc1ff" opacity="0.45"/><rect x="1641" y="191.4" width="1" height="1.5" fill="#d4d4d4" opacity="0.18"/><rect x="1643" y="191.4" width="1" height="1.5" fill="#ce9178" opacity="0.18"/><rect x="1644" y="191.4" width="5" height="1.5" fill="#ce9178" opacity="0.45"/><rect x="1649" y="191.4" width="1" height="1.5" fill="#ce9178" opacity="0.18"/><rect x="1650" y="191.4" width="1" height="1.5" fill="#d4d4d4" opacity="0.18"/><rect x="1630" y="193.4" width="2" height="1.5" fill="#b5cea8" opacity="0.45"/><rect x="1632" y="193.4" width="1" height="1.5" fill="#d4d4d4" opacity="0.18"/><rect x="1634" y="193.4" width="1" height="1.5" fill="#ce9178" opacity="0.18"/><rect x="1635" y="193.4" width="5" height="1.5" fill="#ce9178" opacity="0.45"/><rect x="1640" y="193.4" width="1" height="1.5" fill="#ce9178" opacity="0.18"/><rect x="1628" y="195.4" width="1" height="1.5" fill="#da70d6" opacity="0.18"/><rect x="1629" y="195.4" width="1" height="1.5" fill="#d4d4d4" opacity="0.18"/><rect x="1628" y="199.4" width="3" height="1.5" fill="#569cd6" opacity="0.45"/><rect x="1632" y="199.4" width="8" height="1.5" fill="#9cdcfe" opacity="0.45"/><rect x="1641" y="199.4" width="1" height="1.5" fill="#d4d4d4" opacity="0.18"/><rect x="1643" y="199.4" width="6" height="1.5" fill="#9cdcfe" opacity="0.45"/><rect x="1649" y="199.4" width="1" height="1.5" fill="#da70d6" opacity="0.18"/><rect x="1650" y="199.4" width="7" height="1.5" fill="#9cdcfe" opacity="0.45"/><rect x="1657" y="199.4" width="1" height="1.5" fill="#da70d6" opacity="0.18"/><rect x="1658" y="199.4" width="1" height="1.5" fill="#d4d4d4" opacity="0.18"/><rect x="1628" y="201.4" width="2" height="1.5" fill="#c586c0" opacity="0.45"/><rect x="1631" y="201.4" width="1" height="1.5" fill="#da70d6" opacity="0.18"/><rect x="1632" y="201.4" width="8" height="1.5" fill="#9cdcfe" opacity="0.45"/><rect x="1640" y="201.4" width="1" height="1.5" fill="#da70d6" opacity="0.18"/><rect x="1642" y="201.4" width="1" height="1.5" fill="#da70d6" opacity="0.18"/><rect x="1630" y="203.4" width="2" height="1.5" fill="#c586c0" opacity="0.45"/><rect x="1633" y="203.4" width="1" height="1.5" fill="#179fff" opacity="0.18"/><rect x="1634" y="203.4" width="12" height="1.5" fill="#9cdcfe" opacity="0.45"/><rect x="1647" y="203.4" width="2" height="1.5" fill="#d4d4d4" opacity="0.18"/><rect x="1650" y="203.4" width="12" height="1.5" fill="#9cdcfe" opacity="0.45"/><rect x="1662" y="203.4" width="1" height="1.5" fill="#d4d4d4" opacity="0.18"/><rect x="1663" y="203.4" width="9" height="1.5" fill="#dcdcaa" opacity="0.45"/><rect x="1672" y="203.4" width="2" height="1.5" fill="#ffd700" opacity="0.18"/><rect x="1674" y="203.4" width="1" height="1.5" fill="#179fff" opacity="0.18"/><rect x="1676" y="203.4" width="1" height="1.5" fill="#179fff" opacity="0.18"/><rect x="1632" y="205.4" width="12" height="1.5" fill="#9cdcfe" opacity="0.45"/><rect x="1644" y="205.4" width="1" height="1.5" fill="#d4d4d4" opacity="0.18"/><rect x="1645" y="205.4" width="4" height="1.5" fill="#dcdcaa" opacity="0.45"/><rect x="1649" y="205.4" width="2" height="1.5" fill="#ffd700" opacity="0.18"/><rect x="1651" y="205.4" width="1" height="1.5" fill="#d4d4d4" opacity="0.18"/><rect x="1630" y="207.4" width="1" height="1.5" fill="#179fff" opacity="0.18"/><rect x="1630" y="209.4" width="12" height="1.5" fill="#9cdcfe" opacity="0.45"/><rect x="1643" y="209.4" width="1" height="1.5" fill="#d4d4d4" opacity="0.18"/><rect x="1645" y="209.4" width="6" height="1.5" fill="#9cdcfe" opacity="0.45"/><rect x="1651" y="209.4" width="1" height="1.5" fill="#179fff" opacity="0.18"/><rect x="1652" y="209.4" width="8" height="1.5" fill="#9cdcfe" opacity="0.45"/><rect x="1660" y="209.4" width="1" height="1.5" fill="#179fff" opacity="0.18"/><rect x="1661" y="209.4" width="1" height="1.5" fill="#d4d4d4" opacity="0.18"/><rect x="1630" y="211.4" width="12" height="1.5" fill="#9cdcfe" opacity="0.45"/><rect x="1642" y="211.4" width="1" height="1.5" fill="#d4d4d4" opacity="0.18"/><rect x="1643" y="211.4" width="4" height="1.5" fill="#dcdcaa" opacity="0.45"/><rect x="1647" y="211.4" width="2" height="1.5" fill="#179fff" opacity="0.18"/><rect x="1649" y="211.4" width="1" height="1.5" fill="#d4d4d4" opacity="0.18"/><rect x="1630" y="213.4" width="10" height="1.5" fill="#9cdcfe" opacity="0.45"/><rect x="1641" y="213.4" width="1" height="1.5" fill="#d4d4d4" opacity="0.18"/><rect x="1643" y="213.4" width="8" height="1.5" fill="#9cdcfe" opacity="0.45"/><rect x="1651" y="213.4" width="1" height="1.5" fill="#d4d4d4" opacity="0.18"/><rect x="1630" y="215.4" width="9" height="1.5" fill="#9cdcfe" opacity="0.45"/><rect x="1640" y="215.4" width="1" height="1.5" fill="#d4d4d4" opacity="0.18"/><rect x="1642" y="215.4" width="3" height="1.5" fill="#b5cea8" opacity="0.45"/><rect x="1645" y="215.4" width="1" height="1.5" fill="#d4d4d4" opacity="0.18"/><rect x="1647" y="215.4" width="2" height="1.5" fill="#6a9955" opacity="0.18"/><rect x="1650" y="215.4" width="1" height="1.5" fill="#6a9955" opacity="0.45"/><rect x="1652" y="215.4" width="7" height="1.5" fill="#6a9955" opacity="0.45"/><rect x="1660" y="215.4" width="3" height="1.5" fill="#6a9955" opacity="0.45"/><rect x="1664" y="215.4" width="9" height="1.5" fill="#6a9955" opacity="0.45"/><rect x="1630" y="219.4" width="2" height="1.5" fill="#c586c0" opacity="0.45"/><rect x="1633" y="219.4" width="1" height="1.5" fill="#179fff" opacity="0.18"/><rect x="1634" y="219.4" width="8" height="1.5" fill="#9cdcfe" opacity="0.45"/><rect x="1643" y="219.4" width="3" height="1.5" fill="#d4d4d4" opacity="0.18"/><rect x="1647" y="219.4" width="1" height="1.5" fill="#ce9178" opacity="0.18"/><rect x="1648" y="219.4" width="4" height="1.5" fill="#ce9178" opacity="0.45"/><rect x="1652" y="219.4" width="1" height="1.5" fill="#ce9178" opacity="0.18"/><rect x="1653" y="219.4" width="1" height="1.5" fill="#179fff" opacity="0.18"/><rect x="1655" y="219.4" width="11" height="1.5" fill="#dcdcaa" opacity="0.45"/><rect x="1666" y="219.4" width="2" height="1.5" fill="#179fff" opacity="0.18"/><rect x="1668" y="219.4" width="1" height="1.5" fill="#d4d4d4" opacity="0.18"/><rect x="1630" y="221.4" width="2" height="1.5" fill="#c586c0" opacity="0.45"/><rect x="1633" y="221.4" width="1" height="1.5" fill="#179fff" opacity="0.18"/><rect x="1634" y="221.4" width="8" height="1.5" fill="#9cdcfe" opacity="0.45"/><rect x="1643" y="221.4" width="3" height="1.5" fill="#d4d4d4" opacity="0.18"/><rect x="1647" y="221.4" width="1" height="1.5" fill="#ce9178" opacity="0.18"/><rect x="1648" y="221.4" width="4" height="1.5" fill="#ce9178" opacity="0.45"/><rect x="1652" y="221.4" width="1" height="1.5" fill="#ce9178" opacity="0.18"/><rect x="1653" y="221.4" width="1" height="1.5" fill="#179fff" opacity="0.18"/><rect x="1655" y="221.4" width="11" height="1.5" fill="#dcdcaa" opacity="0.45"/><rect x="1666" y="221.4" width="2" height="1.5" fill="#179fff" opacity="0.18"/><rect x="1668" y="221.4" width="1" height="1.5" fill="#d4d4d4" opacity="0.18"/><rect x="1630" y="223.4" width="2" height="1.5" fill="#c586c0" opacity="0.45"/><rect x="1633" y="223.4" width="1" height="1.5" fill="#179fff" opacity="0.18"/><rect x="1634" y="223.4" width="8" height="1.5" fill="#9cdcfe" opacity="0.45"/><rect x="1643" y="223.4" width="3" height="1.5" fill="#d4d4d4" opacity="0.18"/><rect x="1647" y="223.4" width="1" height="1.5" fill="#ce9178" opacity="0.18"/><rect x="1648" y="223.4" width="5" height="1.5" fill="#ce9178" opacity="0.45"/><rect x="1653" y="223.4" width="1" height="1.5" fill="#ce9178" opacity="0.18"/><rect x="1654" y="223.4" width="1" height="1.5" fill="#179fff" opacity="0.18"/><rect x="1656" y="223.4" width="10" height="1.5" fill="#dcdcaa" opacity="0.45"/><rect x="1666" y="223.4" width="2" height="1.5" fill="#179fff" opacity="0.18"/><rect x="1668" y="223.4" width="1" height="1.5" fill="#d4d4d4" opacity="0.18"/><rect x="1628" y="225.4" width="1" height="1.5" fill="#da70d6" opacity="0.18"/><rect x="1626" y="227.4" width="1" height="1.5" fill="#ffd700" opacity="0.18"/><rect x="1626" y="231.4" width="2" height="1.5" fill="#6a9955" opacity="0.18"/><rect x="1629" y="231.4" width="1" height="1.5" fill="#6a9955" opacity="0.45"/><rect x="1630" y="231.4" width="1" height="1.5" fill="#6a9955" opacity="0.18"/><rect x="1632" y="231.4" width="7" height="1.5" fill="#6a9955" opacity="0.45"/><rect x="1640" y="231.4" width="5" height="1.5" fill="#6a9955" opacity="0.45"/><rect x="1646" y="231.4" width="4" height="1.5" fill="#6a9955" opacity="0.45"/><rect x="1626" y="233.4" width="8" height="1.5" fill="#569cd6" opacity="0.45"/><rect x="1635" y="233.4" width="15" height="1.5" fill="#dcdcaa" opacity="0.45"/><rect x="1650" y="233.4" width="2" height="1.5" fill="#ffd700" opacity="0.18"/><rect x="1653" y="233.4" width="1" height="1.5" fill="#ffd700" opacity="0.18"/><rect x="1628" y="235.4" width="4" height="1.5" fill="#dcdcaa" opacity="0.45"/><rect x="1632" y="235.4" width="1" height="1.5" fill="#da70d6" opacity="0.18"/><rect x="1633" y="235.4" width="1" height="1.5" fill="#b5cea8" opacity="0.45"/><rect x="1634" y="235.4" width="1" height="1.5" fill="#d4d4d4" opacity="0.18"/><rect x="1636" y="235.4" width="3" height="1.5" fill="#b5cea8" opacity="0.45"/><rect x="1639" y="235.4" width="1" height="1.5" fill="#d4d4d4" opacity="0.18"/><rect x="1641" y="235.4" width="3" height="1.5" fill="#b5cea8" opacity="0.45"/><rect x="1644" y="235.4" width="1" height="1.5" fill="#da70d6" opacity="0.18"/><rect x="1645" y="235.4" width="1" height="1.5" fill="#d4d4d4" opacity="0.18"/><rect x="1628" y="237.4" width="5" height="1.5" fill="#9cdcfe" opacity="0.45"/><rect x="1634" y="237.4" width="2" height="1.5" fill="#d4d4d4" opacity="0.18"/><rect x="1637" y="237.4" width="1" height="1.5" fill="#b5cea8" opacity="0.45"/><rect x="1638" y="237.4" width="1" height="1.5" fill="#d4d4d4" opacity="0.18"/><rect x="1628" y="239.4" width="2" height="1.5" fill="#c586c0" opacity="0.45"/><rect x="1631" y="239.4" width="1" height="1.5" fill="#da70d6" opacity="0.18"/><rect x="1632" y="239.4" width="5" height="1.5" fill="#9cdcfe" opacity="0.45"/><rect x="1638" y="239.4" width="1" height="1.5" fill="#d4d4d4" opacity="0.18"/><rect x="1640" y="239.4" width="5" height="1.5" fill="#9cdcfe" opacity="0.45"/><rect x="1646" y="239.4" width="1" height="1.5" fill="#d4d4d4" opacity="0.18"/><rect x="1648" y="239.4" width="2" height="1.5" fill="#b5cea8" opacity="0.45"/><rect x="1650" y="239.4" width="1" height="1.5" fill="#da70d6" opacity="0.18"/><rect x="1652" y="239.4" width="5" height="1.5" fill="#9cdcfe" opacity="0.45"/><rect x="1658" y="239.4" width="1" height="1.5" fill="#d4d4d4" opacity="0.18"/><rect x="1660" y="239.4" width="5" height="1.5" fill="#9cdcfe" opacity="0.45"/><rect x="1666" y="239.4" width="1" height="1.5" fill="#d4d4d4" opacity="0.18"/><rect x="1668" y="239.4" width="1" height="1.5" fill="#b5cea8" opacity="0.45"/><rect x="1669" y="239.4" width="1" height="1.5" fill="#d4d4d4" opacity="0.18"/><rect x="1628" y="241.4" width="7" height="1.5" fill="#dcdcaa" opacity="0.45"/><rect x="1635" y="241.4" width="1" height="1.5" fill="#da70d6" opacity="0.18"/><rect x="1636" y="241.4" width="5" height="1.5" fill="#9cdcfe" opacity="0.45"/><rect x="1641" y="241.4" width="1" height="1.5" fill="#d4d4d4" opacity="0.18"/><rect x="1643" y="241.4" width="6" height="1.5" fill="#9cdcfe" opacity="0.45"/><rect x="1650" y="241.4" width="1" height="1.5" fill="#d4d4d4" opacity="0.18"/><rect x="1652" y="241.4" width="1" height="1.5" fill="#b5cea8" opacity="0.45"/><rect x="1653" y="241.4" width="1" height="1.5" fill="#d4d4d4" opacity="0.18"/><rect x="1655" y="241.4" width="2" height="1.5" fill="#b5cea8" opacity="0.45"/><rect x="1657" y="241.4" width="1" height="1.5" fill="#d4d4d4" opacity="0.18"/><rect x="1659" y="241.4" width="2" height="1.5" fill="#b5cea8" opacity="0.45"/><rect x="1661" y="241.4" width="1" height="1.5" fill="#da70d6" opacity="0.18"/><rect x="1662" y="241.4" width="1" height="1.5" fill="#d4d4d4" opacity="0.18"/><rect x="1628" y="243.4" width="2" height="1.5" fill="#c586c0" opacity="0.45"/><rect x="1631" y="243.4" width="1" height="1.5" fill="#da70d6" opacity="0.18"/><rect x="1632" y="243.4" width="9" height="1.5" fill="#9cdcfe" opacity="0.45"/><rect x="1642" y="243.4" width="1" height="1.5" fill="#d4d4d4" opacity="0.18"/><rect x="1644" y="243.4" width="2" height="1.5" fill="#b5cea8" opacity="0.45"/><rect x="1646" y="243.4" width="1" height="1.5" fill="#da70d6" opacity="0.18"/><rect x="1648" y="243.4" width="1" height="1.5" fill="#da70d6" opacity="0.18"/><rect x="1630" y="245.4" width="5" height="1.5" fill="#9cdcfe" opacity="0.45"/><rect x="1636" y="245.4" width="1" height="1.5" fill="#d4d4d4" opacity="0.18"/><rect x="1638" y="245.4" width="4" height="1.5" fill="#dcdcaa" opacity="0.45"/><rect x="1642" y="245.4" width="1" height="1.5" fill="#179fff" opacity="0.18"/><rect x="1643" y="245.4" width="5" height="1.5" fill="#9cdcfe" opacity="0.45"/><rect x="1648" y="245.4" width="1" height="1.5" fill="#d4d4d4" opacity="0.18"/><rect x="1650" y="245.4" width="5" height="1.5" fill="#9cdcfe" opacity="0.45"/><rect x="1656" y="245.4" width="1" height="1.5" fill="#d4d4d4" opacity="0.18"/><rect x="1658" y="245.4" width="1" height="1.5" fill="#b5cea8" opacity="0.45"/><rect x="1659" y="245.4" width="1" height="1.5" fill="#d4d4d4" opacity="0.18"/><rect x="1661" y="245.4" width="1" height="1.5" fill="#b5cea8" opacity="0.45"/><rect x="1662" y="245.4" width="1" height="1.5" fill="#b5cea8" opacity="0.18"/><rect x="1663" y="245.4" width="2" height="1.5" fill="#b5cea8" opacity="0.45"/><rect x="1665" y="245.4" width="1" height="1.5" fill="#179fff" opacity="0.18"/><rect x="1666" y="245.4" width="1" height="1.5" fill="#d4d4d4" opacity="0.18"/><rect x="1630" y="247.4" width="7" height="1.5" fill="#dcdcaa" opacity="0.45"/><rect x="1637" y="247.4" width="1" height="1.5" fill="#179fff" opacity="0.18"/><rect x="1638" y="247.4" width="5" height="1.5" fill="#9cdcfe" opacity="0.45"/><rect x="1644" y="247.4" width="1" height="1.5" fill="#d4d4d4" opacity="0.18"/><rect x="1646" y="247.4" width="1" height="1.5" fill="#b5cea8" opacity="0.45"/><rect x="1647" y="247.4" width="1" height="1.5" fill="#d4d4d4" opacity="0.18"/><rect x="1649" y="247.4" width="6" height="1.5" fill="#9cdcfe" opacity="0.45"/><rect x="1656" y="247.4" width="1" height="1.5" fill="#d4d4d4" opacity="0.18"/><rect x="1658" y="247.4" width="1" height="1.5" fill="#b5cea8" opacity="0.45"/><rect x="1660" y="247.4" width="1" height="1.5" fill="#d4d4d4" opacity="0.18"/><rect x="1662" y="247.4" width="1" height="1.5" fill="#ffd700" opacity="0.18"/><rect x="1663" y="247.4" width="2" height="1.5" fill="#b5cea8" opacity="0.45"/><rect x="1666" y="247.4" width="1" height="1.5" fill="#d4d4d4" opacity="0.18"/><rect x="1668" y="247.4" width="9" height="1.5" fill="#9cdcfe" opacity="0.45"/><rect x="1677" y="247.4" width="1" height="1.5" fill="#ffd700" opacity="0.18"/><rect x="1679" y="247.4" width="1" height="1.5" fill="#d4d4d4" opacity="0.18"/><rect x="1681" y="247.4" width="1" height="1.5" fill="#b5cea8" opacity="0.45"/><rect x="1682" y="247.4" width="1" height="1.5" fill="#d4d4d4" opacity="0.18"/><rect x="1684" y="247.4" width="2" height="1.5" fill="#b5cea8" opacity="0.45"/><rect x="1686" y="247.4" width="1" height="1.5" fill="#d4d4d4" opacity="0.18"/><rect x="1688" y="247.4" width="2" height="1.5" fill="#b5cea8" opacity="0.45"/><rect x="1690" y="247.4" width="1" height="1.5" fill="#179fff" opacity="0.18"/><rect x="1691" y="247.4" width="1" height="1.5" fill="#d4d4d4" opacity="0.18"/><rect x="1628" y="249.4" width="1" height="1.5" fill="#da70d6" opacity="0.18"/><rect x="1626" y="251.4" width="1" height="1.5" fill="#ffd700" opacity="0.18"/><rect x="1626" y="255.4" width="2" height="1.5" fill="#6a9955" opacity="0.18"/><rect x="1629" y="255.4" width="1" height="1.5" fill="#6a9955" opacity="0.45"/><rect x="1630" y="255.4" width="1" height="1.5" fill="#6a9955" opacity="0.18"/><rect x="1632" y="255.4" width="7" height="1.5" fill="#6a9955" opacity="0.45"/><rect x="1640" y="255.4" width="7" height="1.5" fill="#6a9955" opacity="0.45"/><rect x="1626" y="257.4" width="8" height="1.5" fill="#569cd6" opacity="0.45"/><rect x="1635" y="257.4" width="11" height="1.5" fill="#dcdcaa" opacity="0.45"/><rect x="1646" y="257.4" width="2" height="1.5" fill="#ffd700" opacity="0.18"/><rect x="1649" y="257.4" width="1" height="1.5" fill="#ffd700" opacity="0.18"/><rect x="1628" y="259.4" width="7" height="1.5" fill="#9cdcfe" opacity="0.45"/><rect x="1636" y="259.4" width="1" height="1.5" fill="#d4d4d4" opacity="0.18"/><rect x="1638" y="259.4" width="2" height="1.5" fill="#da70d6" opacity="0.18"/><rect x="1640" y="259.4" width="1" height="1.5" fill="#d4d4d4" opacity="0.18"/><rect x="1628" y="261.4" width="3" height="1.5" fill="#c586c0" opacity="0.45"/><rect x="1632" y="261.4" width="1" height="1.5" fill="#da70d6" opacity="0.18"/><rect x="1633" y="261.4" width="3" height="1.5" fill="#569cd6" opacity="0.45"/><rect x="1637" y="261.4" width="1" height="1.5" fill="#9cdcfe" opacity="0.45"/><rect x="1639" y="261.4" width="1" height="1.5" fill="#d4d4d4" opacity="0.18"/><rect x="1641" y="261.4" width="1" height="1.5" fill="#b5cea8" opacity="0.45"/><rect x="1642" y="261.4" width="1" height="1.5" fill="#d4d4d4" opacity="0.18"/><rect x="1644" y="261.4" width="1" height="1.5" fill="#9cdcfe" opacity="0.45"/><rect x="1646" y="261.4" width="1" height="1.5" fill="#d4d4d4" opacity="0.18"/><rect x="1648" y="261.4" width="2" height="1.5" fill="#b5cea8" opacity="0.45"/><rect x="1650" y="261.4" width="1" height="1.5" fill="#d4d4d4" opacity="0.18"/><rect x="1652" y="261.4" width="1" height="1.5" fill="#9cdcfe" opacity="0.45"/><rect x="1653" y="261.4" width="2" height="1.5" fill="#d4d4d4" opacity="0.18"/><rect x="1655" y="261.4" width="1" height="1.5" fill="#da70d6" opacity="0.18"/><rect x="1657" y="261.4" width="1" height="1.5" fill="#da70d6" opacity="0.18"/><rect x="1630" y="263.4" width="7" height="1.5" fill="#9cdcfe" opacity="0.45"/><rect x="1637" y="263.4" width="1" height="1.5" fill="#d4d4d4" opacity="0.18"/><rect x="1638" y="263.4" width="4" height="1.5" fill="#dcdcaa" opacity="0.45"/><rect x="1642" y="263.4" width="1" height="1.5" fill="#179fff" opacity="0.18"/><rect x="1643" y="263.4" width="1" height="1.5" fill="#ffd700" opacity="0.18"/><rect x="1645" y="263.4" width="1" height="1.5" fill="#9cdcfe" opacity="0.45"/><rect x="1646" y="263.4" width="1" height="1.5" fill="#d4d4d4" opacity="0.18"/><rect x="1648" y="263.4" width="6" height="1.5" fill="#dcdcaa" opacity="0.45"/><rect x="1654" y="263.4" width="1" height="1.5" fill="#da70d6" opacity="0.18"/><rect x="1655" y="263.4" width="5" height="1.5" fill="#9cdcfe" opacity="0.45"/><rect x="1660" y="263.4" width="1" height="1.5" fill="#da70d6" opacity="0.18"/><rect x="1661" y="263.4" width="1" height="1.5" fill="#d4d4d4" opacity="0.18"/><rect x="1663" y="263.4" width="1" height="1.5" fill="#9cdcfe" opacity="0.45"/><rect x="1664" y="263.4" width="1" height="1.5" fill="#d4d4d4" opacity="0.18"/><rect x="1666" y="263.4" width="6" height="1.5" fill="#dcdcaa" opacity="0.45"/><rect x="1672" y="263.4" width="1" height="1.5" fill="#da70d6" opacity="0.18"/><rect x="1673" y="263.4" width="6" height="1.5" fill="#9cdcfe" opacity="0.45"/><rect x="1679" y="263.4" width="1" height="1.5" fill="#da70d6" opacity="0.18"/><rect x="1680" y="263.4" width="1" height="1.5" fill="#d4d4d4" opacity="0.18"/><rect x="1682" y="263.4" width="1" height="1.5" fill="#9cdcfe" opacity="0.45"/><rect x="1683" y="263.4" width="1" height="1.5" fill="#d4d4d4" opacity="0.18"/><rect x="1685" y="263.4" width="6" height="1.5" fill="#dcdcaa" opacity="0.45"/><rect x="1691" y="263.4" width="1" height="1.5" fill="#da70d6" opacity="0.18"/><rect x="1692" y="263.4" width="2" height="1.5" fill="#b5cea8" opacity="0.45"/><rect x="1694" y="263.4" width="1" height="1.5" fill="#d4d4d4" opacity="0.18"/><rect x="1696" y="263.4" width="2" height="1.5" fill="#b5cea8" opacity="0.45"/><rect x="1698" y="263.4" width="1" height="1.5" fill="#da70d6" opacity="0.18"/><rect x="1700" y="263.4" width="1" height="1.5" fill="#ffd700" opacity="0.18"/><rect x="1701" y="263.4" width="1" height="1.5" fill="#179fff" opacity="0.18"/><rect x="1702" y="263.4" width="1" height="1.5" fill="#d4d4d4" opacity="0.18"/><rect x="1628" y="265.4" width="1" height="1.5" fill="#da70d6" opacity="0.18"/><rect x="1626" y="267.4" width="1" height="1.5" fill="#ffd700" opacity="0.18"/><rect x="1626" y="269.4" width="8" height="1.5" fill="#569cd6" opacity="0.45"/><rect x="1635" y="269.4" width="18" height="1.5" fill="#dcdcaa" opacity="0.45"/><rect x="1653" y="269.4" width="2" height="1.5" fill="#ffd700" opacity="0.18"/><rect x="1656" y="269.4" width="1" height="1.5" fill="#ffd700" opacity="0.18"/><rect x="1628" y="271.4" width="4" height="1.5" fill="#dcdcaa" opacity="0.45"/><rect x="1632" y="271.4" width="1" height="1.5" fill="#da70d6" opacity="0.18"/><rect x="1633" y="271.4" width="3" height="1.5" fill="#b5cea8" opacity="0.45"/><rect x="1636" y="271.4" width="1" height="1.5" fill="#d4d4d4" opacity="0.18"/><rect x="1638" y="271.4" width="3" height="1.5" fill="#b5cea8" opacity="0.45"/><rect x="1641" y="271.4" width="1" height="1.5" fill="#d4d4d4" opacity="0.18"/><rect x="1643" y="271.4" width="3" height="1.5" fill="#b5cea8" opacity="0.45"/><rect x="1646" y="271.4" width="1" height="1.5" fill="#da70d6" opacity="0.18"/><rect x="1647" y="271.4" width="1" height="1.5" fill="#d4d4d4" opacity="0.18"/><rect x="1628" y="273.4" width="3" height="1.5" fill="#c586c0" opacity="0.45"/><rect x="1632" y="273.4" width="1" height="1.5" fill="#da70d6" opacity="0.18"/><rect x="1633" y="273.4" width="3" height="1.5" fill="#569cd6" opacity="0.45"/><rect x="1637" y="273.4" width="1" height="1.5" fill="#9cdcfe" opacity="0.45"/><rect x="1639" y="273.4" width="2" height="1.5" fill="#569cd6" opacity="0.45"/><rect x="1642" y="273.4" width="7" height="1.5" fill="#9cdcfe" opacity="0.45"/><rect x="1649" y="273.4" width="1" height="1.5" fill="#da70d6" opacity="0.18"/><rect x="1651" y="273.4" width="1" height="1.5" fill="#da70d6" opacity="0.18"/><rect x="1630" y="275.4" width="1" height="1.5" fill="#9cdcfe" opacity="0.45"/><rect x="1631" y="275.4" width="1" height="1.5" fill="#d4d4d4" opacity="0.18"/><rect x="1632" y="275.4" width="1" height="1.5" fill="#9cdcfe" opacity="0.45"/><rect x="1634" y="275.4" width="2" height="1.5" fill="#d4d4d4" opacity="0.18"/><rect x="1637" y="275.4" width="6" height="1.5" fill="#dcdcaa" opacity="0.45"/><rect x="1643" y="275.4" width="1" height="1.5" fill="#179fff" opacity="0.18"/><rect x="1644" y="275.4" width="1" height="1.5" fill="#b5cea8" opacity="0.45"/><rect x="1645" y="275.4" width="1" height="1.5" fill="#d4d4d4" opacity="0.18"/><rect x="1647" y="275.4" width="1" height="1.5" fill="#b5cea8" opacity="0.45"/><rect x="1648" y="275.4" width="1" height="1.5" fill="#179fff" opacity="0.18"/><rect x="1649" y="275.4" width="1" height="1.5" fill="#d4d4d4" opacity="0.18"/><rect x="1630" y="277.4" width="1" height="1.5" fill="#9cdcfe" opacity="0.45"/><rect x="1631" y="277.4" width="1" height="1.5" fill="#d4d4d4" opacity="0.18"/><rect x="1632" y="277.4" width="1" height="1.5" fill="#9cdcfe" opacity="0.45"/><rect x="1634" y="277.4" width="2" height="1.5" fill="#d4d4d4" opacity="0.18"/><rect x="1637" y="277.4" width="6" height="1.5" fill="#dcdcaa" opacity="0.45"/><rect x="1643" y="277.4" width="1" height="1.5" fill="#179fff" opacity="0.18"/><rect x="1644" y="277.4" width="1" height="1.5" fill="#d4d4d4" opacity="0.18"/><rect x="1645" y="277.4" width="1" height="1.5" fill="#b5cea8" opacity="0.45"/><rect x="1646" y="277.4" width="1" height="1.5" fill="#d4d4d4" opacity="0.18"/><rect x="1648" y="277.4" width="1" height="1.5" fill="#b5cea8" opacity="0.45"/><rect x="1649" y="277.4" width="1" height="1.5" fill="#179fff" opacity="0.18"/><rect x="1650" y="277.4" width="1" height="1.5" fill="#d4d4d4" opacity="0.18"/><rect x="1630" y="279.4" width="7" height="1.5" fill="#dcdcaa" opacity="0.45"/><rect x="1637" y="279.4" width="1" height="1.5" fill="#179fff" opacity="0.18"/><rect x="1638" y="279.4" width="1" height="1.5" fill="#9cdcfe" opacity="0.45"/><rect x="1639" y="279.4" width="1" height="1.5" fill="#d4d4d4" opacity="0.18"/><rect x="1640" y="279.4" width="1" height="1.5" fill="#9cdcfe" opacity="0.45"/><rect x="1641" y="279.4" width="1" height="1.5" fill="#d4d4d4" opacity="0.18"/><rect x="1643" y="279.4" width="1" height="1.5" fill="#9cdcfe" opacity="0.45"/><rect x="1644" y="279.4" width="1" height="1.5" fill="#d4d4d4" opacity="0.18"/><rect x="1645" y="279.4" width="1" height="1.5" fill="#9cdcfe" opacity="0.45"/><rect x="1646" y="279.4" width="1" height="1.5" fill="#d4d4d4" opacity="0.18"/><rect x="1648" y="279.4" width="1" height="1.5" fill="#9cdcfe" opacity="0.45"/><rect x="1649" y="279.4" width="1" height="1.5" fill="#d4d4d4" opacity="0.18"/><rect x="1650" y="279.4" width="1" height="1.5" fill="#9cdcfe" opacity="0.45"/><rect x="1651" y="279.4" width="1" height="1.5" fill="#179fff" opacity="0.18"/><rect x="1652" y="279.4" width="1" height="1.5" fill="#d4d4d4" opacity="0.18"/><rect x="1628" y="281.4" width="1" height="1.5" fill="#da70d6" opacity="0.18"/><rect x="1626" y="283.4" width="1" height="1.5" fill="#ffd700" opacity="0.18"/><rect x="1626" y="287.4" width="2" height="1.5" fill="#6a9955" opacity="0.18"/><rect x="1629" y="287.4" width="1" height="1.5" fill="#6a9955" opacity="0.45"/><rect x="1630" y="287.4" width="1" height="1.5" fill="#6a9955" opacity="0.18"/><rect x="1632" y="287.4" width="6" height="1.5" fill="#6a9955" opacity="0.45"/><rect x="1639" y="287.4" width="5" height="1.5" fill="#6a9955" opacity="0.45"/><rect x="1645" y="287.4" width="2" height="1.5" fill="#6a9955" opacity="0.45"/><rect x="1648" y="287.4" width="6" height="1.5" fill="#6a9955" opacity="0.45"/><rect x="1655" y="287.4" width="7" height="1.5" fill="#6a9955" opacity="0.45"/><rect x="1626" y="289.4" width="8" height="1.5" fill="#569cd6" opacity="0.45"/><rect x="1635" y="289.4" width="11" height="1.5" fill="#dcdcaa" opacity="0.45"/><rect x="1646" y="289.4" width="2" height="1.5" fill="#ffd700" opacity="0.18"/><rect x="1649" y="289.4" width="1" height="1.5" fill="#ffd700" opacity="0.18"/><rect x="1628" y="291.4" width="7" height="1.5" fill="#9cdcfe" opacity="0.45"/><rect x="1636" y="291.4" width="1" height="1.5" fill="#d4d4d4" opacity="0.18"/><rect x="1638" y="291.4" width="2" height="1.5" fill="#da70d6" opacity="0.18"/><rect x="1640" y="291.4" width="1" height="1.5" fill="#d4d4d4" opacity="0.18"/><rect x="1628" y="293.4" width="11" height="1.5" fill="#9cdcfe" opacity="0.45"/><rect x="1640" y="293.4" width="1" height="1.5" fill="#d4d4d4" opacity="0.18"/><rect x="1642" y="293.4" width="6" height="1.5" fill="#dcdcaa" opacity="0.45"/><rect x="1648" y="293.4" width="2" height="1.5" fill="#da70d6" opacity="0.18"/><rect x="1650" y="293.4" width="1" height="1.5" fill="#d4d4d4" opacity="0.18"/><rect x="1628" y="295.4" width="3" height="1.5" fill="#c586c0" opacity="0.45"/><rect x="1632" y="295.4" width="1" height="1.5" fill="#da70d6" opacity="0.18"/><rect x="1633" y="295.4" width="3" height="1.5" fill="#569cd6" opacity="0.45"/><rect x="1637" y="295.4" width="1" height="1.5" fill="#9cdcfe" opacity="0.45"/><rect x="1639" y="295.4" width="1" height="1.5" fill="#d4d4d4" opacity="0.18"/><rect x="1641" y="295.4" width="1" height="1.5" fill="#b5cea8" opacity="0.45"/><rect x="1642" y="295.4" width="1" height="1.5" fill="#d4d4d4" opacity="0.18"/><rect x="1644" y="295.4" width="1" height="1.5" fill="#9cdcfe" opacity="0.45"/><rect x="1646" y="295.4" width="1" height="1.5" fill="#d4d4d4" opacity="0.18"/><rect x="1648" y="295.4" width="2" height="1.5" fill="#b5cea8" opacity="0.45"/><rect x="1650" y="295.4" width="1" height="1.5" fill="#d4d4d4" opacity="0.18"/><rect x="1652" y="295.4" width="1" height="1.5" fill="#9cdcfe" opacity="0.45"/><rect x="1653" y="295.4" width="2" height="1.5" fill="#d4d4d4" opacity="0.18"/><rect x="1655" y="295.4" width="1" height="1.5" fill="#da70d6" opacity="0.18"/><rect x="1657" y="295.4" width="1" height="1.5" fill="#da70d6" opacity="0.18"/><rect x="1630" y="297.4" width="3" height="1.5" fill="#569cd6" opacity="0.45"/><rect x="1634" y="297.4" width="5" height="1.5" fill="#9cdcfe" opacity="0.45"/><rect x="1640" y="297.4" width="1" height="1.5" fill="#d4d4d4" opacity="0.18"/><rect x="1642" y="297.4" width="1" height="1.5" fill="#9cdcfe" opacity="0.45"/><rect x="1644" y="297.4" width="1" height="1.5" fill="#d4d4d4" opacity="0.18"/><rect x="1646" y="297.4" width="3" height="1.5" fill="#b5cea8" opacity="0.45"/><rect x="1649" y="297.4" width="1" height="1.5" fill="#d4d4d4" opacity="0.18"/><rect x="1630" y="299.4" width="3" height="1.5" fill="#569cd6" opacity="0.45"/><rect x="1634" y="299.4" width="4" height="1.5" fill="#9cdcfe" opacity="0.45"/><rect x="1639" y="299.4" width="1" height="1.5" fill="#d4d4d4" opacity="0.18"/><rect x="1641" y="299.4" width="1" height="1.5" fill="#9cdcfe" opacity="0.45"/><rect x="1643" y="299.4" width="1" height="1.5" fill="#d4d4d4" opacity="0.18"/><rect x="1645" y="299.4" width="1" height="1.5" fill="#b5cea8" opacity="0.45"/><rect x="1647" y="299.4" width="1" height="1.5" fill="#d4d4d4" opacity="0.18"/><rect x="1649" y="299.4" width="1" height="1.5" fill="#ce9178" opacity="0.18"/><rect x="1650" y="299.4" width="1" height="1.5" fill="#ce9178" opacity="0.45"/><rect x="1651" y="299.4" width="1" height="1.5" fill="#ce9178" opacity="0.18"/><rect x="1653" y="299.4" width="1" height="1.5" fill="#d4d4d4" opacity="0.18"/><rect x="1655" y="299.4" width="1" height="1.5" fill="#ce9178" opacity="0.18"/><rect x="1656" y="299.4" width="1" height="1.5" fill="#ce9178" opacity="0.45"/><rect x="1657" y="299.4" width="1" height="1.5" fill="#ce9178" opacity="0.18"/><rect x="1659" y="299.4" width="1" height="1.5" fill="#d4d4d4" opacity="0.18"/><rect x="1661" y="299.4" width="6" height="1.5" fill="#4ec9b0" opacity="0.45"/><rect x="1667" y="299.4" width="1" height="1.5" fill="#d4d4d4" opacity="0.18"/><rect x="1668" y="299.4" width="12" height="1.5" fill="#dcdcaa" opacity="0.45"/><rect x="1680" y="299.4" width="1" height="1.5" fill="#179fff" opacity="0.18"/><rect x="1681" y="299.4" width="2" height="1.5" fill="#b5cea8" opacity="0.45"/><rect x="1684" y="299.4" width="1" height="1.5" fill="#d4d4d4" opacity="0.18"/><rect x="1686" y="299.4" width="1" height="1.5" fill="#9cdcfe" opacity="0.45"/><rect x="1688" y="299.4" width="1" height="1.5" fill="#d4d4d4" opacity="0.18"/><rect x="1690" y="299.4" width="2" height="1.5" fill="#b5cea8" opacity="0.45"/><rect x="1692" y="299.4" width="1" height="1.5" fill="#179fff" opacity="0.18"/><rect x="1693" y="299.4" width="1" height="1.5" fill="#d4d4d4" opacity="0.18"/><rect x="1630" y="301.4" width="7" height="1.5" fill="#9cdcfe" opacity="0.45"/><rect x="1637" y="301.4" width="1" height="1.5" fill="#d4d4d4" opacity="0.18"/><rect x="1638" y="301.4" width="4" height="1.5" fill="#dcdcaa" opacity="0.45"/><rect x="1642" y="301.4" width="1" height="1.5" fill="#179fff" opacity="0.18"/><rect x="1643" y="301.4" width="1" height="1.5" fill="#ffd700" opacity="0.18"/><rect x="1645" y="301.4" width="4" height="1.5" fill="#9cdcfe" opacity="0.45"/><rect x="1649" y="301.4" width="1" height="1.5" fill="#d4d4d4" opacity="0.18"/><rect x="1651" y="301.4" width="4" height="1.5" fill="#9cdcfe" opacity="0.45"/><rect x="1655" y="301.4" width="1" height="1.5" fill="#d4d4d4" opacity="0.18"/><rect x="1657" y="301.4" width="5" height="1.5" fill="#9cdcfe" opacity="0.45"/><rect x="1662" y="301.4" width="1" height="1.5" fill="#d4d4d4" opacity="0.18"/><rect x="1664" y="301.4" width="5" height="1.5" fill="#9cdcfe" opacity="0.45"/><rect x="1670" y="301.4" width="1" height="1.5" fill="#ffd700" opacity="0.18"/><rect x="1671" y="301.4" width="1" height="1.5" fill="#179fff" opacity="0.18"/><rect x="1672" y="301.4" width="1" height="1.5" fill="#d4d4d4" opacity="0.18"/><rect x="1628" y="303.4" width="1" height="1.5" fill="#da70d6" opacity="0.18"/><rect x="1626" y="305.4" width="1" height="1.5" fill="#ffd700" opacity="0.18"/><rect x="1626" y="307.4" width="8" height="1.5" fill="#569cd6" opacity="0.45"/><rect x="1635" y="307.4" width="17" height="1.5" fill="#dcdcaa" opacity="0.45"/><rect x="1652" y="307.4" width="2" height="1.5" fill="#ffd700" opacity="0.18"/><rect x="1655" y="307.4" width="1" height="1.5" fill="#ffd700" opacity="0.18"/><rect x="1628" y="309.4" width="3" height="1.5" fill="#569cd6" opacity="0.45"/><rect x="1632" y="309.4" width="1" height="1.5" fill="#9cdcfe" opacity="0.45"/><rect x="1634" y="309.4" width="1" height="1.5" fill="#d4d4d4" opacity="0.18"/><rect x="1636" y="309.4" width="6" height="1.5" fill="#dcdcaa" opacity="0.45"/><rect x="1642" y="309.4" width="2" height="1.5" fill="#da70d6" opacity="0.18"/><rect x="1645" y="309.4" width="1" height="1.5" fill="#d4d4d4" opacity="0.18"/><rect x="1647" y="309.4" width="11" height="1.5" fill="#9cdcfe" opacity="0.45"/><rect x="1658" y="309.4" width="1" height="1.5" fill="#d4d4d4" opacity="0.18"/><rect x="1628" y="311.4" width="3" height="1.5" fill="#569cd6" opacity="0.45"/><rect x="1632" y="311.4" width="1" height="1.5" fill="#9cdcfe" opacity="0.45"/><rect x="1634" y="311.4" width="1" height="1.5" fill="#d4d4d4" opacity="0.18"/><rect x="1636" y="311.4" width="5" height="1.5" fill="#9cdcfe" opacity="0.45"/><rect x="1642" y="311.4" width="1" height="1.5" fill="#d4d4d4" opacity="0.18"/><rect x="1644" y="311.4" width="1" height="1.5" fill="#b5cea8" opacity="0.45"/><rect x="1645" y="311.4" width="1" height="1.5" fill="#d4d4d4" opacity="0.18"/><rect x="1628" y="313.4" width="3" height="1.5" fill="#569cd6" opacity="0.45"/><rect x="1632" y="313.4" width="1" height="1.5" fill="#9cdcfe" opacity="0.45"/><rect x="1634" y="313.4" width="1" height="1.5" fill="#d4d4d4" opacity="0.18"/><rect x="1636" y="313.4" width="6" height="1.5" fill="#9cdcfe" opacity="0.45"/><rect x="1643" y="313.4" width="1" height="1.5" fill="#d4d4d4" opacity="0.18"/><rect x="1645" y="313.4" width="1" height="1.5" fill="#b5cea8" opacity="0.45"/><rect x="1646" y="313.4" width="1" height="1.5" fill="#d4d4d4" opacity="0.18"/><rect x="1628" y="315.4" width="3" height="1.5" fill="#c586c0" opacity="0.45"/><rect x="1632" y="315.4" width="1" height="1.5" fill="#da70d6" opacity="0.18"/><rect x="1633" y="315.4" width="3" height="1.5" fill="#569cd6" opacity="0.45"/><rect x="1637" y="315.4" width="1" height="1.5" fill="#9cdcfe" opacity="0.45"/><rect x="1639" y="315.4" width="1" height="1.5" fill="#d4d4d4" opacity="0.18"/><rect x="1641" y="315.4" width="1" height="1.5" fill="#b5cea8" opacity="0.45"/><rect x="1642" y="315.4" width="1" height="1.5" fill="#d4d4d4" opacity="0.18"/><rect x="1644" y="315.4" width="1" height="1.5" fill="#9cdcfe" opacity="0.45"/><rect x="1646" y="315.4" width="1" height="1.5" fill="#d4d4d4" opacity="0.18"/><rect x="1648" y="315.4" width="7" height="1.5" fill="#9cdcfe" opacity="0.45"/><rect x="1655" y="315.4" width="1" height="1.5" fill="#d4d4d4" opacity="0.18"/><rect x="1656" y="315.4" width="6" height="1.5" fill="#9cdcfe" opacity="0.45"/><rect x="1662" y="315.4" width="1" height="1.5" fill="#d4d4d4" opacity="0.18"/><rect x="1664" y="315.4" width="1" height="1.5" fill="#9cdcfe" opacity="0.45"/><rect x="1665" y="315.4" width="2" height="1.5" fill="#d4d4d4" opacity="0.18"/><rect x="1667" y="315.4" width="1" height="1.5" fill="#da70d6" opacity="0.18"/><rect x="1669" y="315.4" width="1" height="1.5" fill="#da70d6" opacity="0.18"/><rect x="1630" y="317.4" width="2" height="1.5" fill="#c586c0" opacity="0.45"/><rect x="1633" y="317.4" width="1" height="1.5" fill="#179fff" opacity="0.18"/><rect x="1634" y="317.4" width="1" height="1.5" fill="#9cdcfe" opacity="0.45"/><rect x="1636" y="317.4" width="1" height="1.5" fill="#d4d4d4" opacity="0.18"/><rect x="1638" y="317.4" width="7" height="1.5" fill="#9cdcfe" opacity="0.45"/><rect x="1645" y="317.4" width="1" height="1.5" fill="#ffd700" opacity="0.18"/><rect x="1646" y="317.4" width="1" height="1.5" fill="#9cdcfe" opacity="0.45"/><rect x="1647" y="317.4" width="1" height="1.5" fill="#ffd700" opacity="0.18"/><rect x="1648" y="317.4" width="1" height="1.5" fill="#d4d4d4" opacity="0.18"/><rect x="1649" y="317.4" width="5" height="1.5" fill="#9cdcfe" opacity="0.45"/><rect x="1654" y="317.4" width="1" height="1.5" fill="#179fff" opacity="0.18"/><rect x="1656" y="317.4" width="1" height="1.5" fill="#179fff" opacity="0.18"/><rect x="1632" y="319.4" width="4" height="1.5" fill="#dcdcaa" opacity="0.45"/><rect x="1636" y="319.4" width="1" height="1.5" fill="#ffd700" opacity="0.18"/><rect x="1637" y="319.4" width="7" height="1.5" fill="#9cdcfe" opacity="0.45"/><rect x="1644" y="319.4" width="1" height="1.5" fill="#da70d6" opacity="0.18"/><rect x="1645" y="319.4" width="1" height="1.5" fill="#9cdcfe" opacity="0.45"/><rect x="1646" y="319.4" width="1" height="1.5" fill="#da70d6" opacity="0.18"/><rect x="1647" y="319.4" width="1" height="1.5" fill="#d4d4d4" opacity="0.18"/><rect x="1648" y="319.4" width="4" height="1.5" fill="#9cdcfe" opacity="0.45"/><rect x="1652" y="319.4" width="1" height="1.5" fill="#d4d4d4" opacity="0.18"/><rect x="1654" y="319.4" width="1" height="1.5" fill="#9cdcfe" opacity="0.45"/><rect x="1656" y="319.4" width="1" height="1.5" fill="#d4d4d4" opacity="0.18"/><rect x="1658" y="319.4" width="1" height="1.5" fill="#9cdcfe" opacity="0.45"/><rect x="1660" y="319.4" width="1" height="1.5" fill="#d4d4d4" opacity="0.18"/><rect x="1662" y="319.4" width="2" height="1.5" fill="#b5cea8" opacity="0.45"/><rect x="1665" y="319.4" width="1" height="1.5" fill="#d4d4d4" opacity="0.18"/><rect x="1667" y="319.4" width="2" height="1.5" fill="#b5cea8" opacity="0.45"/><rect x="1669" y="319.4" width="1" height="1.5" fill="#d4d4d4" opacity="0.18"/><rect x="1671" y="319.4" width="1" height="1.5" fill="#9cdcfe" opacity="0.45"/><rect x="1672" y="319.4" width="1" height="1.5" fill="#ffd700" opacity="0.18"/><rect x="1673" y="319.4" width="1" height="1.5" fill="#d4d4d4" opacity="0.18"/><rect x="1630" y="321.4" width="1" height="1.5" fill="#179fff" opacity="0.18"/><rect x="1628" y="323.4" width="1" height="1.5" fill="#da70d6" opacity="0.18"/><rect x="1626" y="325.4" width="1" height="1.5" fill="#ffd700" opacity="0.18"/><rect x="1626" y="329.4" width="2" height="1.5" fill="#6a9955" opacity="0.18"/><rect x="1629" y="329.4" width="1" height="1.5" fill="#6a9955" opacity="0.45"/><rect x="1630" y="329.4" width="1" height="1.5" fill="#6a9955" opacity="0.18"/><rect x="1632" y="329.4" width="5" height="1.5" fill="#6a9955" opacity="0.45"/><rect x="1638" y="329.4" width="5" height="1.5" fill="#6a9955" opacity="0.45"/><rect x="1644" y="329.4" width="6" height="1.5" fill="#6a9955" opacity="0.45"/><rect x="1626" y="331.4" width="8" height="1.5" fill="#569cd6" opacity="0.45"/><rect x="1635" y="331.4" width="10" height="1.5" fill="#dcdcaa" opacity="0.45"/><rect x="1645" y="331.4" width="2" height="1.5" fill="#ffd700" opacity="0.18"/><rect x="1648" y="331.4" width="1" height="1.5" fill="#ffd700" opacity="0.18"/><rect x="1628" y="333.4" width="3" height="1.5" fill="#c586c0" opacity="0.45"/><rect x="1632" y="333.4" width="1" height="1.5" fill="#da70d6" opacity="0.18"/><rect x="1633" y="333.4" width="3" height="1.5" fill="#569cd6" opacity="0.45"/><rect x="1637" y="333.4" width="1" height="1.5" fill="#9cdcfe" opacity="0.45"/><rect x="1639" y="333.4" width="1" height="1.5" fill="#d4d4d4" opacity="0.18"/><rect x="1641" y="333.4" width="1" height="1.5" fill="#b5cea8" opacity="0.45"/><rect x="1642" y="333.4" width="1" height="1.5" fill="#d4d4d4" opacity="0.18"/><rect x="1644" y="333.4" width="1" height="1.5" fill="#9cdcfe" opacity="0.45"/><rect x="1646" y="333.4" width="1" height="1.5" fill="#d4d4d4" opacity="0.18"/><rect x="1648" y="333.4" width="1" height="1.5" fill="#b5cea8" opacity="0.45"/><rect x="1649" y="333.4" width="1" height="1.5" fill="#d4d4d4" opacity="0.18"/><rect x="1651" y="333.4" width="1" height="1.5" fill="#9cdcfe" opacity="0.45"/><rect x="1652" y="333.4" width="2" height="1.5" fill="#d4d4d4" opacity="0.18"/><rect x="1654" y="333.4" width="1" height="1.5" fill="#da70d6" opacity="0.18"/><rect x="1656" y="333.4" width="1" height="1.5" fill="#da70d6" opacity="0.18"/><rect x="1630" y="335.4" width="7" height="1.5" fill="#9cdcfe" opacity="0.45"/><rect x="1637" y="335.4" width="1" height="1.5" fill="#d4d4d4" opacity="0.18"/><rect x="1638" y="335.4" width="4" height="1.5" fill="#dcdcaa" opacity="0.45"/><rect x="1642" y="335.4" width="1" height="1.5" fill="#179fff" opacity="0.18"/><rect x="1643" y="335.4" width="1" height="1.5" fill="#ffd700" opacity="0.18"/><rect x="1645" y="335.4" width="1" height="1.5" fill="#9cdcfe" opacity="0.45"/><rect x="1646" y="335.4" width="1" height="1.5" fill="#d4d4d4" opacity="0.18"/><rect x="1648" y="335.4" width="6" height="1.5" fill="#dcdcaa" opacity="0.45"/><rect x="1654" y="335.4" width="1" height="1.5" fill="#da70d6" opacity="0.18"/><rect x="1655" y="335.4" width="5" height="1.5" fill="#9cdcfe" opacity="0.45"/><rect x="1660" y="335.4" width="1" height="1.5" fill="#da70d6" opacity="0.18"/><rect x="1661" y="335.4" width="1" height="1.5" fill="#d4d4d4" opacity="0.18"/><rect x="1663" y="335.4" width="1" height="1.5" fill="#9cdcfe" opacity="0.45"/><rect x="1664" y="335.4" width="1" height="1.5" fill="#d4d4d4" opacity="0.18"/><rect x="1666" y="335.4" width="6" height="1.5" fill="#dcdcaa" opacity="0.45"/><rect x="1672" y="335.4" width="1" height="1.5" fill="#da70d6" opacity="0.18"/><rect x="1673" y="335.4" width="6" height="1.5" fill="#9cdcfe" opacity="0.45"/><rect x="1679" y="335.4" width="1" height="1.5" fill="#da70d6" opacity="0.18"/><rect x="1680" y="335.4" width="1" height="1.5" fill="#d4d4d4" opacity="0.18"/><rect x="1682" y="335.4" width="1" height="1.5" fill="#9cdcfe" opacity="0.45"/><rect x="1683" y="335.4" width="1" height="1.5" fill="#d4d4d4" opacity="0.18"/><rect x="1685" y="335.4" width="1" height="1.5" fill="#b5cea8" opacity="0.45"/><rect x="1687" y="335.4" width="1" height="1.5" fill="#ffd700" opacity="0.18"/><rect x="1688" y="335.4" width="1" height="1.5" fill="#179fff" opacity="0.18"/><rect x="1689" y="335.4" width="1" height="1.5" fill="#d4d4d4" opacity="0.18"/><rect x="1628" y="337.4" width="1" height="1.5" fill="#da70d6" opacity="0.18"/><rect x="1626" y="339.4" width="1" height="1.5" fill="#ffd700" opacity="0.18"/><rect x="1626" y="341.4" width="8" height="1.5" fill="#569cd6" opacity="0.45"/><rect x="1635" y="341.4" width="11" height="1.5" fill="#dcdcaa" opacity="0.45"/><rect x="1646" y="341.4" width="2" height="1.5" fill="#ffd700" opacity="0.18"/><rect x="1649" y="341.4" width="1" height="1.5" fill="#ffd700" opacity="0.18"/><rect x="1628" y="343.4" width="6" height="1.5" fill="#dcdcaa" opacity="0.45"/><rect x="1634" y="343.4" width="2" height="1.5" fill="#da70d6" opacity="0.18"/><rect x="1636" y="343.4" width="1" height="1.5" fill="#d4d4d4" opacity="0.18"/><rect x="1628" y="345.4" width="6" height="1.5" fill="#dcdcaa" opacity="0.45"/><rect x="1634" y="345.4" width="1" height="1.5" fill="#da70d6" opacity="0.18"/><rect x="1635" y="345.4" width="3" height="1.5" fill="#b5cea8" opacity="0.45"/><rect x="1638" y="345.4" width="1" height="1.5" fill="#da70d6" opacity="0.18"/><rect x="1639" y="345.4" width="1" height="1.5" fill="#d4d4d4" opacity="0.18"/><rect x="1628" y="347.4" width="3" height="1.5" fill="#c586c0" opacity="0.45"/><rect x="1632" y="347.4" width="1" height="1.5" fill="#da70d6" opacity="0.18"/><rect x="1633" y="347.4" width="3" height="1.5" fill="#569cd6" opacity="0.45"/><rect x="1637" y="347.4" width="1" height="1.5" fill="#9cdcfe" opacity="0.45"/><rect x="1639" y="347.4" width="2" height="1.5" fill="#569cd6" opacity="0.45"/><rect x="1642" y="347.4" width="7" height="1.5" fill="#9cdcfe" opacity="0.45"/><rect x="1649" y="347.4" width="1" height="1.5" fill="#da70d6" opacity="0.18"/><rect x="1651" y="347.4" width="1" height="1.5" fill="#da70d6" opacity="0.18"/><rect x="1630" y="349.4" width="7" height="1.5" fill="#dcdcaa" opacity="0.45"/><rect x="1637" y="349.4" width="1" height="1.5" fill="#179fff" opacity="0.18"/><rect x="1638" y="349.4" width="1" height="1.5" fill="#9cdcfe" opacity="0.45"/><rect x="1639" y="349.4" width="1" height="1.5" fill="#d4d4d4" opacity="0.18"/><rect x="1640" y="349.4" width="1" height="1.5" fill="#9cdcfe" opacity="0.45"/><rect x="1641" y="349.4" width="1" height="1.5" fill="#d4d4d4" opacity="0.18"/><rect x="1643" y="349.4" width="1" height="1.5" fill="#9cdcfe" opacity="0.45"/><rect x="1644" y="349.4" width="1" height="1.5" fill="#d4d4d4" opacity="0.18"/><rect x="1645" y="349.4" width="1" height="1.5" fill="#9cdcfe" opacity="0.45"/><rect x="1646" y="349.4" width="1" height="1.5" fill="#d4d4d4" opacity="0.18"/><rect x="1648" y="349.4" width="1" height="1.5" fill="#9cdcfe" opacity="0.45"/><rect x="1649" y="349.4" width="1" height="1.5" fill="#d4d4d4" opacity="0.18"/><rect x="1650" y="349.4" width="1" height="1.5" fill="#9cdcfe" opacity="0.45"/><rect x="1651" y="349.4" width="1" height="1.5" fill="#179fff" opacity="0.18"/><rect x="1652" y="349.4" width="1" height="1.5" fill="#d4d4d4" opacity="0.18"/><rect x="1630" y="351.4" width="1" height="1.5" fill="#9cdcfe" opacity="0.45"/><rect x="1631" y="351.4" width="1" height="1.5" fill="#d4d4d4" opacity="0.18"/><rect x="1632" y="351.4" width="1" height="1.5" fill="#9cdcfe" opacity="0.45"/><rect x="1634" y="351.4" width="2" height="1.5" fill="#d4d4d4" opacity="0.18"/><rect x="1637" y="351.4" width="1" height="1.5" fill="#b5cea8" opacity="0.45"/><rect x="1638" y="351.4" width="1" height="1.5" fill="#d4d4d4" opacity="0.18"/><rect x="1628" y="353.4" width="1" height="1.5" fill="#da70d6" opacity="0.18"/><rect x="1628" y="355.4" width="8" height="1.5" fill="#dcdcaa" opacity="0.45"/><rect x="1636" y="355.4" width="2" height="1.5" fill="#da70d6" opacity="0.18"/><rect x="1638" y="355.4" width="1" height="1.5" fill="#d4d4d4" opacity="0.18"/><rect x="1626" y="357.4" width="1" height="1.5" fill="#ffd700" opacity="0.18"/><rect x="1626" y="361.4" width="2" height="1.5" fill="#6a9955" opacity="0.18"/><rect x="1629" y="361.4" width="1" height="1.5" fill="#6a9955" opacity="0.45"/><rect x="1630" y="361.4" width="1" height="1.5" fill="#6a9955" opacity="0.18"/><rect x="1632" y="361.4" width="11" height="1.5" fill="#6a9955" opacity="0.45"/><rect x="1643" y="361.4" width="1" height="1.5" fill="#6a9955" opacity="0.18"/><rect x="1645" y="361.4" width="8" height="1.5" fill="#6a9955" opacity="0.45"/><rect x="1654" y="361.4" width="4" height="1.5" fill="#6a9955" opacity="0.45"/><rect x="1659" y="361.4" width="3" height="1.5" fill="#6a9955" opacity="0.45"/><rect x="1663" y="361.4" width="7" height="1.5" fill="#6a9955" opacity="0.45"/><rect x="1671" y="361.4" width="5" height="1.5" fill="#6a9955" opacity="0.45"/><rect x="1626" y="363.4" width="3" height="1.5" fill="#569cd6" opacity="0.45"/><rect x="1630" y="363.4" width="5" height="1.5" fill="#9cdcfe" opacity="0.45"/><rect x="1636" y="363.4" width="1" height="1.5" fill="#d4d4d4" opacity="0.18"/><rect x="1638" y="363.4" width="1" height="1.5" fill="#b5cea8" opacity="0.45"/><rect x="1639" y="363.4" width="1" height="1.5" fill="#d4d4d4" opacity="0.18"/><rect x="1626" y="365.4" width="8" height="1.5" fill="#569cd6" opacity="0.45"/><rect x="1635" y="365.4" width="16" height="1.5" fill="#dcdcaa" opacity="0.45"/><rect x="1651" y="365.4" width="2" height="1.5" fill="#ffd700" opacity="0.18"/><rect x="1654" y="365.4" width="1" height="1.5" fill="#ffd700" opacity="0.18"/><rect x="1628" y="367.4" width="4" height="1.5" fill="#dcdcaa" opacity="0.45"/><rect x="1632" y="367.4" width="2" height="1.5" fill="#da70d6" opacity="0.18"/><rect x="1634" y="367.4" width="1" height="1.5" fill="#d4d4d4" opacity="0.18"/><rect x="1628" y="369.4" width="9" height="1.5" fill="#dcdcaa" opacity="0.45"/><rect x="1637" y="369.4" width="1" height="1.5" fill="#da70d6" opacity="0.18"/><rect x="1638" y="369.4" width="5" height="1.5" fill="#9cdcfe" opacity="0.45"/><rect x="1644" y="369.4" width="1" height="1.5" fill="#d4d4d4" opacity="0.18"/><rect x="1646" y="369.4" width="1" height="1.5" fill="#b5cea8" opacity="0.45"/><rect x="1647" y="369.4" width="1" height="1.5" fill="#d4d4d4" opacity="0.18"/><rect x="1649" y="369.4" width="6" height="1.5" fill="#9cdcfe" opacity="0.45"/><rect x="1656" y="369.4" width="1" height="1.5" fill="#d4d4d4" opacity="0.18"/><rect x="1658" y="369.4" width="1" height="1.5" fill="#b5cea8" opacity="0.45"/><rect x="1659" y="369.4" width="1" height="1.5" fill="#da70d6" opacity="0.18"/><rect x="1660" y="369.4" width="1" height="1.5" fill="#d4d4d4" opacity="0.18"/><rect x="1628" y="371.4" width="6" height="1.5" fill="#dcdcaa" opacity="0.45"/><rect x="1634" y="371.4" width="1" height="1.5" fill="#da70d6" opacity="0.18"/><rect x="1635" y="371.4" width="5" height="1.5" fill="#9cdcfe" opacity="0.45"/><rect x="1640" y="371.4" width="1" height="1.5" fill="#da70d6" opacity="0.18"/><rect x="1641" y="371.4" width="1" height="1.5" fill="#d4d4d4" opacity="0.18"/><rect x="1628" y="373.4" width="4" height="1.5" fill="#dcdcaa" opacity="0.45"/><rect x="1632" y="373.4" width="1" height="1.5" fill="#da70d6" opacity="0.18"/><rect x="1633" y="373.4" width="1" height="1.5" fill="#b5cea8" opacity="0.45"/><rect x="1634" y="373.4" width="1" height="1.5" fill="#da70d6" opacity="0.18"/><rect x="1635" y="373.4" width="1" height="1.5" fill="#d4d4d4" opacity="0.18"/><rect x="1628" y="375.4" width="7" height="1.5" fill="#dcdcaa" opacity="0.45"/><rect x="1635" y="375.4" width="1" height="1.5" fill="#da70d6" opacity="0.18"/><rect x="1636" y="375.4" width="1" height="1.5" fill="#b5cea8" opacity="0.45"/><rect x="1637" y="375.4" width="1" height="1.5" fill="#d4d4d4" opacity="0.18"/><rect x="1639" y="375.4" width="1" height="1.5" fill="#b5cea8" opacity="0.45"/><rect x="1640" y="375.4" width="1" height="1.5" fill="#d4d4d4" opacity="0.18"/><rect x="1642" y="375.4" width="3" height="1.5" fill="#b5cea8" opacity="0.45"/><rect x="1645" y="375.4" width="1" height="1.5" fill="#da70d6" opacity="0.18"/><rect x="1646" y="375.4" width="1" height="1.5" fill="#d4d4d4" opacity="0.18"/><rect x="1628" y="377.4" width="4" height="1.5" fill="#dcdcaa" opacity="0.45"/><rect x="1632" y="377.4" width="1" height="1.5" fill="#da70d6" opacity="0.18"/><rect x="1633" y="377.4" width="3" height="1.5" fill="#b5cea8" opacity="0.45"/><rect x="1636" y="377.4" width="1" height="1.5" fill="#da70d6" opacity="0.18"/><rect x="1637" y="377.4" width="1" height="1.5" fill="#d4d4d4" opacity="0.18"/><rect x="1628" y="379.4" width="7" height="1.5" fill="#dcdcaa" opacity="0.45"/><rect x="1635" y="379.4" width="1" height="1.5" fill="#da70d6" opacity="0.18"/><rect x="1636" y="379.4" width="1" height="1.5" fill="#b5cea8" opacity="0.45"/><rect x="1637" y="379.4" width="1" height="1.5" fill="#d4d4d4" opacity="0.18"/><rect x="1639" y="379.4" width="1" height="1.5" fill="#b5cea8" opacity="0.45"/><rect x="1640" y="379.4" width="1" height="1.5" fill="#d4d4d4" opacity="0.18"/><rect x="1642" y="379.4" width="2" height="1.5" fill="#b5cea8" opacity="0.45"/><rect x="1644" y="379.4" width="1" height="1.5" fill="#da70d6" opacity="0.18"/><rect x="1645" y="379.4" width="1" height="1.5" fill="#d4d4d4" opacity="0.18"/><rect x="1628" y="381.4" width="3" height="1.5" fill="#dcdcaa" opacity="0.45"/><rect x="1631" y="381.4" width="2" height="1.5" fill="#da70d6" opacity="0.18"/><rect x="1633" y="381.4" width="1" height="1.5" fill="#d4d4d4" opacity="0.18"/><rect x="1628" y="385.4" width="5" height="1.5" fill="#9cdcfe" opacity="0.45"/><rect x="1634" y="385.4" width="2" height="1.5" fill="#d4d4d4" opacity="0.18"/><rect x="1637" y="385.4" width="1" height="1.5" fill="#b5cea8" opacity="0.45"/><rect x="1638" y="385.4" width="1" height="1.5" fill="#b5cea8" opacity="0.18"/><rect x="1639" y="385.4" width="2" height="1.5" fill="#b5cea8" opacity="0.45"/><rect x="1641" y="385.4" width="1" height="1.5" fill="#d4d4d4" opacity="0.18"/><rect x="1626" y="387.4" width="1" height="1.5" fill="#ffd700" opacity="0.18"/><rect x="1626" y="391.4" width="8" height="1.5" fill="#569cd6" opacity="0.45"/><rect x="1635" y="391.4" width="11" height="1.5" fill="#dcdcaa" opacity="0.45"/><rect x="1646" y="391.4" width="2" height="1.5" fill="#ffd700" opacity="0.18"/><rect x="1649" y="391.4" width="1" height="1.5" fill="#ffd700" opacity="0.18"/><rect x="1628" y="393.4" width="11" height="1.5" fill="#dcdcaa" opacity="0.45"/><rect x="1639" y="393.4" width="2" height="1.5" fill="#da70d6" opacity="0.18"/><rect x="1641" y="393.4" width="1" height="1.5" fill="#d4d4d4" opacity="0.18"/><rect x="1626" y="395.4" width="1" height="1.5" fill="#ffd700" opacity="0.18"/></g>
<g><path d="M6.0 12.2 L19.2 0.9 L20.4 1.5 L20.4 5.8 L7.8 14.5 Q7.0 14.9 6.5 14.3 L5.8 13.4 Q5.5 12.8 6.0 12.2 Z" fill="#3680cf"/><path d="M6.0 7.7 Q5.5 7.1 5.8 6.5 L6.5 5.6 Q7.0 5.0 7.8 5.4 L20.4 14.2 L20.4 18.4 L19.2 19.0 Z" fill="#4391dd"/><path d="M19.2 0.9 L24.0 3.2 V16.7 L19.2 19.0 L19.9 14 V6 Z" fill="#5aa8ec"/></g>
<path d="M499.8 10.5 H486 M491.6 4.6 L485.7 10.5 L491.6 16.4" fill="none" stroke="#cccccc" stroke-width="1.3"/>
<path d="M515.3 10.5 H529.4 M523.8 4.6 L529.7 10.5 L523.8 16.4" fill="none" stroke="#7f7f7f" stroke-width="1.3"/>
<g fill="none" stroke="#cccccc" stroke-width="1.3"><circle cx="825" cy="8.6" r="4.6"/><path d="M821.6 12 L815.3 18.3"/></g>
<g transform="translate(1230.8 1.7) scale(1.0000)"><g fill="#d6d6d6"><circle cx="6.1" cy="4.2" r="4.1"/><circle cx="13.8" cy="4.2" r="4.1"/><path d="M2.6 6.7 C0.8 7.9 0.1 9.1 0.1 10.9 C0.1 12.5 0.8 13.3 2.2 14.2 C4.6 15.8 7.2 16.5 9.9 16.5 C12.6 16.5 15.2 15.8 17.6 14.2 C19 13.3 19.7 12.5 19.7 10.9 C19.7 9.1 19 7.9 17.2 6.7 Z"/></g><g fill="#181818"><ellipse cx="6.1" cy="4.2" rx="1.85" ry="2.25"/><ellipse cx="13.8" cy="4.2" rx="1.85" ry="2.25"/><path d="M4.3 8.6 H15.3 V12.6 Q12.8 14.0 9.8 14.0 Q6.8 14.0 4.3 12.6 Z"/></g><g fill="#d6d6d6"><rect x="7.0" y="9.3" width="1.5" height="3.1"/><rect x="11.3" y="9.3" width="1.5" height="3.1"/></g></g>
<path d="M1255 8.1 L1259.4 12.5 L1263.8 8.1" fill="none" stroke="#cccccc" stroke-width="1.1"/>
<g fill="none" stroke="#cccccc" stroke-width="1.2"><rect x="1481.6" y="4" width="4.8" height="12.2" rx="0.8"/><rect x="1490.6" y="4" width="4.8" height="4.2" rx="0.8"/><rect x="1490.6" y="12" width="4.8" height="4.2" rx="0.8"/><rect x="1510" y="2.8" width="15.2" height="14.2" rx="1.2"/><path d="M1516.4 2.8 V17"/><rect x="1539.8" y="2.8" width="15.2" height="14.2" rx="1.2"/><path d="M1539.8 12.6 H1555"/><rect x="1569.7" y="2.8" width="15.2" height="14.2" rx="1.2"/><path d="M1577.4 2.8 V17"/></g>
<rect x="1510" y="2.8" width="6.4" height="14.2" fill="#cccccc"/>
<g fill="none" stroke="#cccccc" stroke-width="1.1"><path d="M1614 10.6 H1626"/><rect x="1665.8" y="5.6" width="11.6" height="10.8" rx="0.8"/><path d="M1719.2 4.9 L1730.8 16.9 M1730.8 4.9 L1719.2 16.9"/></g>
<g fill="none" stroke="#e1e1e1" stroke-width="2" stroke-linejoin="round"><path d="M33.9 58 V49.2 L29.6 45.1 H19.2 Q17.7 45.1 17.7 46.6 V62.4 Q17.7 63.9 19.2 63.9 H24"/><path d="M27.9 45.1 V50 H33.9"/><path d="M17.7 52 H12.3 Q10.8 52 10.8 53.5 V69.3 Q10.8 70.8 12.3 70.8 H24"/></g>
<circle cx="31.9" cy="67.9" r="9" fill="#3b79d2"/><text x="31.9" y="71.5" font-size="10.4" font-weight="bold" fill="#ffffff" text-anchor="middle">1</text>
<g fill="none" stroke="#868686" stroke-width="1.8"><circle cx="26.8" cy="108.2" r="8.7"/><path d="M20.4 114.9 L10.5 125.9"/></g>
<g fill="none" stroke="#868686" stroke-width="1.8"><circle cx="16.8" cy="158.2" r="3.7"/><circle cx="16.8" cy="177.6" r="3.7"/><circle cx="29.1" cy="163.4" r="3.7"/><path d="M16.8 162 V173.8 M29.1 167.2 Q28.6 170.5 24.5 170.5 H20.3 Q16.8 170.5 16.8 173.8"/></g>
<g fill="none" stroke="#868686" stroke-width="1.8"><path d="M18.5 222.6 V210.4 L36.3 221.9 L24.6 229.3" stroke-linejoin="miter"/></g>
<g fill="none" stroke="#868686" stroke-width="1.5"><ellipse cx="16" cy="231.2" rx="3.9" ry="5.9"/><path d="M12.2 228.8 H19.8"/><path d="M9.2 226 L12 228 M8.8 231.6 H12 M9.2 237.6 L12.3 235 M22.8 226 L20 228 M23.2 231.6 H20 M22.8 237.6 L19.7 235"/></g>
<g fill="none" stroke="#868686" stroke-width="1.9" stroke-linejoin="round"><rect x="26.3" y="266.6" width="9.3" height="9" rx="1.2"/><path d="M20 281.7 V272.4 Q20 271.1 18.7 271.1 H11 Q9.7 271.1 9.7 272.4 V290.6 Q9.7 291.9 11 291.9 H29.5 Q30.8 291.9 30.8 290.6 V283 Q30.8 281.7 29.5 281.7 H9.7 M20 281.7 V291.9"/></g>
<g fill="none" stroke="#868686" stroke-width="1.9"><path d="M34.1 333 V323.1 H10.5 V341.9 H21.2 M15.2 345.1 H21.8"/><circle cx="29.6" cy="340.5" r="6.7" stroke-width="1.7"/><path d="M26.3 337.6 L28.6 340 L26 343.4 M33.2 337 L30.8 339.6 L33 342.4" stroke-width="1.3"/></g>
<g fill="none" stroke="#868686" stroke-width="1.8"><circle cx="22.8" cy="772.8" r="13.1"/><circle cx="22.8" cy="770" r="6"/><path d="M14.4 782.8 Q16.5 776.6 22.8 776.6 Q29.1 776.6 31.2 782.8"/></g>
<g fill="none" stroke="#868686" stroke-width="2" stroke-linejoin="round"><path d="M20.43 819.70 L20.79 815.96 L24.81 815.96 L25.17 819.70 L27.56 820.69 L30.46 818.30 L33.30 821.14 L30.91 824.04 L31.90 826.43 L35.64 826.79 L35.64 830.81 L31.90 831.17 L30.91 833.56 L33.30 836.46 L30.46 839.30 L27.56 836.91 L25.17 837.90 L24.81 841.64 L20.79 841.64 L20.43 837.90 L18.04 836.91 L15.14 839.30 L12.30 836.46 L14.69 833.56 L13.70 831.17 L9.96 830.81 L9.96 826.79 L13.70 826.43 L14.69 824.04 L12.30 821.14 L15.14 818.30 L18.04 820.69 Z"/><circle cx="22.8" cy="828.8" r="3.4"/></g>
<circle cx="31.9" cy="838.5" r="9" fill="#3b79d2"/><text x="31.9" y="842.1" font-size="10.4" font-weight="bold" fill="#ffffff" text-anchor="middle">1</text>
<g fill="#cccccc"><circle cx="312.3" cy="51" r="1.3"/><circle cx="317.9" cy="51" r="1.3"/><circle cx="323.5" cy="51" r="1.3"/></g>
<path d="M56.4 81.8 L61.6 87.4 L66.8 81.8" fill="none" stroke="#cccccc" stroke-width="1.3"/>
<g><path d="M67.6 106.3 H71.39999999999999 L75.6 103.1 V114.5 L71.39999999999999 111.3 H67.6 Z" fill="#a074c4"/><g fill="none" stroke="#a074c4" stroke-width="0.9"><path d="M77.0 105.8 Q78.8 108.8 77.0 111.8"/><path d="M78.39999999999999 104.39999999999999 Q81.39999999999999 108.8 78.39999999999999 113.2"/><path d="M79.6 103.5 Q84.19999999999999 108.8 79.6 114.1"/></g></g>
<g><path d="M67.6 131.6 H71.39999999999999 L75.6 128.4 V139.79999999999998 L71.39999999999999 136.6 H67.6 Z" fill="#a074c4"/><g fill="none" stroke="#a074c4" stroke-width="0.9"><path d="M77.0 131.1 Q78.8 134.1 77.0 137.1"/><path d="M78.39999999999999 129.7 Q81.39999999999999 134.1 78.39999999999999 138.5"/><path d="M79.6 128.79999999999998 Q84.19999999999999 134.1 79.6 139.4"/></g></g>
<g><path d="M67.6 156.9 H71.39999999999999 L75.6 153.70000000000002 V165.1 L71.39999999999999 161.9 H67.6 Z" fill="#a074c4"/><g fill="none" stroke="#a074c4" stroke-width="0.9"><path d="M77.0 156.4 Q78.8 159.4 77.0 162.4"/><path d="M78.39999999999999 155.0 Q81.39999999999999 159.4 78.39999999999999 163.8"/><path d="M79.6 154.1 Q84.19999999999999 159.4 79.6 164.70000000000002"/></g></g>
<g><path d="M67.6 182.2 H71.39999999999999 L75.6 179.0 V190.39999999999998 L71.39999999999999 187.2 H67.6 Z" fill="#a074c4"/><g fill="none" stroke="#a074c4" stroke-width="0.9"><path d="M77.0 181.7 Q78.8 184.7 77.0 187.7"/><path d="M78.39999999999999 180.29999999999998 Q81.39999999999999 184.7 78.39999999999999 189.1"/><path d="M79.6 179.39999999999998 Q84.19999999999999 184.7 79.6 190.0"/></g></g>
<g><path d="M67.6 207.5 H71.39999999999999 L75.6 204.3 V215.7 L71.39999999999999 212.5 H67.6 Z" fill="#a074c4"/><g fill="none" stroke="#a074c4" stroke-width="0.9"><path d="M77.0 207.0 Q78.8 210.0 77.0 213.0"/><path d="M78.39999999999999 205.6 Q81.39999999999999 210.0 78.39999999999999 214.4"/><path d="M79.6 204.7 Q84.19999999999999 210.0 79.6 215.3"/></g></g>
<path d="M73.8 231.5 L69.5 236.0 L73.8 240.5 M76.4 231.5 L80.7 236.0 L76.4 240.5" fill="none" stroke="#e37933" stroke-width="1.8"/>
<text x="69.1" y="264.9" font-size="12" font-weight="bold" fill="#cbcb41" stroke="#cbcb41" stroke-width="0.35" textLength="12" lengthAdjust="spacingAndGlyphs">JS</text>
<path d="M59.4 813.9 L64.8 819.3 L59.4 824.7" fill="none" stroke="#cccccc" stroke-width="1.3"/>
<path d="M59.4 839 L64.8 844.4 L59.4 849.8" fill="none" stroke="#cccccc" stroke-width="1.3"/>
<g stroke="#cfcfcf" stroke-width="1.1"><path d="M364 46.6 H374.1 M364 49.6 H370 M364 52.5 H374.1 M364 55.5 H372.2"/></g>
<text x="570.3" y="55.6" font-size="12" font-weight="bold" fill="#cbcb41" stroke="#cbcb41" stroke-width="0.35" textLength="12" lengthAdjust="spacingAndGlyphs">JS</text>
<circle cx="674.2" cy="51.2" r="5" fill="#ffffff"/>
<path d="M712.8000000000001 46.5 L708.5 51.0 L712.8000000000001 55.5 M715.4000000000001 46.5 L719.7 51.0 L715.4000000000001 55.5" fill="none" stroke="#e37933" stroke-width="1.8"/>
<g fill="none" stroke="#d8d8d8" stroke-width="1.3"><rect x="1690.7" y="43.6" width="13.9" height="13.8" rx="1.4"/><path d="M1697.6 43.6 V57.4"/></g>
<g fill="#d8d8d8"><circle cx="1721.3" cy="51" r="1.25"/><circle cx="1726.9" cy="51" r="1.25"/><circle cx="1732.6" cy="51" r="1.25"/></g>
<text x="368.2" y="88.2" font-size="12" font-weight="bold" fill="#cbcb41" stroke="#cbcb41" stroke-width="0.35" textLength="12" lengthAdjust="spacingAndGlyphs">JS</text>
<path d="M450.3 78.8 L455.6 84.3 L450.3 89.8" fill="none" stroke="#a9a9a9" stroke-width="1.3"/>
<path d="M9.3 867.4 L14.6 871.6 L9.4 876.2 M19.9 863.2 L14.6 867.7 L19.9 872.1" fill="none" stroke="#ffffff" stroke-width="1.2"/>
<g fill="none" stroke="#cccccc" stroke-width="1.2"><circle cx="51.7" cy="870.2" r="6.6"/><path d="M48.6 867.1 L54.8 873.3 M54.8 867.1 L48.6 873.3"/></g>
<g fill="none" stroke="#cccccc" stroke-width="1.2"><path d="M82.5 863.6 L89.3 875.8 H75.7 Z" stroke-linejoin="round"/><path d="M82.5 867.6 V872 M82.5 873.2 V874.6" stroke-width="1.3"/></g>
<g transform="translate(1581.9 863.0) scale(0.8673)"><g fill="#cccccc"><circle cx="6.1" cy="4.2" r="4.1"/><circle cx="13.8" cy="4.2" r="4.1"/><path d="M2.6 6.7 C0.8 7.9 0.1 9.1 0.1 10.9 C0.1 12.5 0.8 13.3 2.2 14.2 C4.6 15.8 7.2 16.5 9.9 16.5 C12.6 16.5 15.2 15.8 17.6 14.2 C19 13.3 19.7 12.5 19.7 10.9 C19.7 9.1 19 7.9 17.2 6.7 Z"/></g><g fill="#181818"><ellipse cx="6.1" cy="4.2" rx="1.85" ry="2.25"/><ellipse cx="13.8" cy="4.2" rx="1.85" ry="2.25"/><path d="M4.3 8.6 H15.3 V12.6 Q12.8 14.0 9.8 14.0 Q6.8 14.0 4.3 12.6 Z"/></g><g fill="#cccccc"><rect x="7.0" y="9.3" width="1.5" height="3.1"/><rect x="11.3" y="9.3" width="1.5" height="3.1"/></g></g>
<g fill="none" stroke="#cccccc" stroke-width="1.25"><circle cx="1624.9" cy="870.6" r="6.7"/><path d="M1620.2 875.3 L1629.6 865.9"/></g>
<path d="M1722.2 874.4 L1723.3 871 V868.1 A4.8 4.8 0 0 1 1732.9 868.1 V871 L1734 874.4 Z M1726.5 875.2 Q1728.1 878.6 1729.7 875.2" fill="none" stroke="#cccccc" stroke-width="1.2" stroke-linejoin="round"/>
</svg>
</body></html>
